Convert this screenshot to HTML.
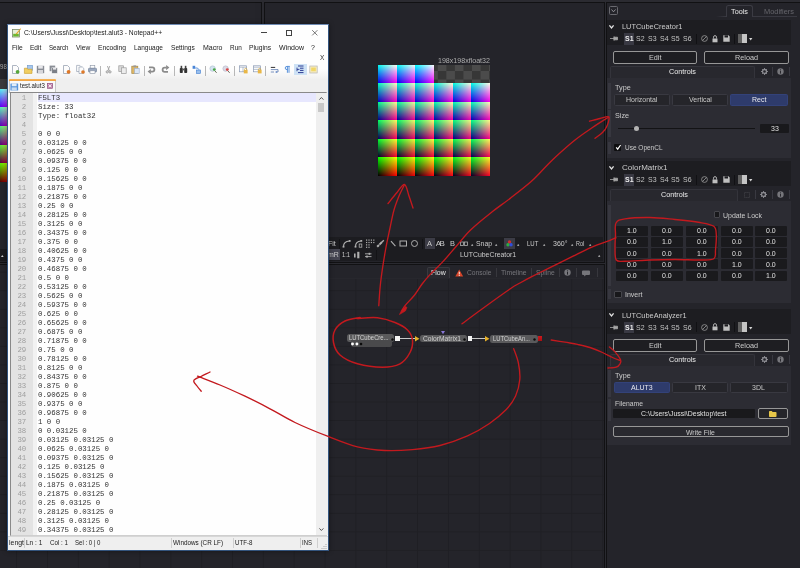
<!DOCTYPE html>
<html><head><meta charset="utf-8"><title>Notepad++ / Fusion LUT</title>
<style>
html,body{margin:0;padding:0;}
body{width:800px;height:568px;overflow:hidden;position:relative;background:#2a2a30;font-family:"Liberation Sans",sans-serif;}
body div{position:absolute;box-sizing:border-box;}
svg{position:absolute;left:0;top:0;overflow:visible;}
</style></head><body>
<div id="root" style="left:0;top:0;width:800px;height:568px;overflow:hidden;will-change:transform;opacity:0.999;">
<div style="left:0px;top:0px;width:800px;height:2.2px;background:#2c2c32;"></div>
<div style="left:-2px;top:2.1px;width:263.6px;height:260.6px;background:#25252b;border:1.2px solid #121214;"></div>
<div style="left:264px;top:2.1px;width:340.6px;height:260.6px;background:#25252b;border:1.2px solid #121214;"></div>
<div style="left:-2px;top:264.2px;width:606.6px;height:306px;background-color:#25252b;border:1.2px solid #121214;background-image:linear-gradient(to right,#202025 1px,transparent 1px),linear-gradient(to bottom,#202025 1px,transparent 1px);background-size:30.85px 18.56px;background-position:17.1px 6.7px;"></div>
<div style="left:0px;top:249px;width:7.5px;height:12.4px;background:#1b1b1f;"></div>
<svg style="left:1px;top:254.8px" width="2.6" height="2" viewBox="0 0 2.6 2"><path d="M0 2 L1.3 0 L2.6 2 Z" fill="#d0d0d0"/></svg>
<div style="left:-0.30px;top:61.90px;line-height:10px;font-size:6.6px;color:#a8a8a8;white-space:pre;transform:scaleX(0.930);transform-origin:0 50%;">98</div>
<div style="left:0px;top:78.8px;width:7.5px;height:10px;background:#3b3b3e;"></div>
<div style="left:0px;top:88.8px;width:7.5px;height:18.58px;background:linear-gradient(to right,#500,#a00),linear-gradient(to top,#000,#0e0),rgb(0,0,242);background-blend-mode:screen;"></div>
<div style="left:0px;top:107.38px;width:7.5px;height:18.58px;background:linear-gradient(to right,#500,#a00),linear-gradient(to top,#000,#0e0),rgb(0,0,182);background-blend-mode:screen;"></div>
<div style="left:0px;top:125.96px;width:7.5px;height:18.58px;background:linear-gradient(to right,#500,#a00),linear-gradient(to top,#000,#0e0),rgb(0,0,121);background-blend-mode:screen;"></div>
<div style="left:0px;top:144.54px;width:7.5px;height:18.58px;background:linear-gradient(to right,#500,#a00),linear-gradient(to top,#000,#0e0),rgb(0,0,61);background-blend-mode:screen;"></div>
<div style="left:0px;top:163.12px;width:7.5px;height:18.58px;background:linear-gradient(to right,#500,#a00),linear-gradient(to top,#000,#0e0),rgb(0,0,0);background-blend-mode:screen;"></div>
<div style="left:434px;top:64.5px;width:56px;height:18.5333px;background-color:#3a3a3a;background-image:conic-gradient(#4c4c4c 25%,#383838 0 50%,#4c4c4c 0 75%,#383838 0);background-size:17.1px 17.1px;background-position:-4.75px -2.55px;"></div>
<div style="left:378px;top:157.17px;width:18.97px;height:18.53px;background:linear-gradient(to right,#000,#f00),linear-gradient(to top,#000,#0f0),rgb(0,0,0);background-blend-mode:screen;"></div>
<div style="left:396.67px;top:157.17px;width:18.97px;height:18.53px;background:linear-gradient(to right,#000,#f00),linear-gradient(to top,#000,#0f0),rgb(0,0,8);background-blend-mode:screen;"></div>
<div style="left:415.33px;top:157.17px;width:18.97px;height:18.53px;background:linear-gradient(to right,#000,#f00),linear-gradient(to top,#000,#0f0),rgb(0,0,16);background-blend-mode:screen;"></div>
<div style="left:434px;top:157.17px;width:18.97px;height:18.53px;background:linear-gradient(to right,#000,#f00),linear-gradient(to top,#000,#0f0),rgb(0,0,24);background-blend-mode:screen;"></div>
<div style="left:452.67px;top:157.17px;width:18.97px;height:18.53px;background:linear-gradient(to right,#000,#f00),linear-gradient(to top,#000,#0f0),rgb(0,0,32);background-blend-mode:screen;"></div>
<div style="left:471.33px;top:157.17px;width:18.67px;height:18.53px;background:linear-gradient(to right,#000,#f00),linear-gradient(to top,#000,#0f0),rgb(0,0,40);background-blend-mode:screen;"></div>
<div style="left:378px;top:138.63px;width:18.97px;height:18.83px;background:linear-gradient(to right,#000,#f00),linear-gradient(to top,#000,#0f0),rgb(0,0,48);background-blend-mode:screen;"></div>
<div style="left:396.67px;top:138.63px;width:18.97px;height:18.83px;background:linear-gradient(to right,#000,#f00),linear-gradient(to top,#000,#0f0),rgb(0,0,56);background-blend-mode:screen;"></div>
<div style="left:415.33px;top:138.63px;width:18.97px;height:18.83px;background:linear-gradient(to right,#000,#f00),linear-gradient(to top,#000,#0f0),rgb(0,0,64);background-blend-mode:screen;"></div>
<div style="left:434px;top:138.63px;width:18.97px;height:18.83px;background:linear-gradient(to right,#000,#f00),linear-gradient(to top,#000,#0f0),rgb(0,0,72);background-blend-mode:screen;"></div>
<div style="left:452.67px;top:138.63px;width:18.97px;height:18.83px;background:linear-gradient(to right,#000,#f00),linear-gradient(to top,#000,#0f0),rgb(0,0,80);background-blend-mode:screen;"></div>
<div style="left:471.33px;top:138.63px;width:18.67px;height:18.83px;background:linear-gradient(to right,#000,#f00),linear-gradient(to top,#000,#0f0),rgb(0,0,88);background-blend-mode:screen;"></div>
<div style="left:378px;top:120.1px;width:18.97px;height:18.83px;background:linear-gradient(to right,#000,#f00),linear-gradient(to top,#000,#0f0),rgb(0,0,96);background-blend-mode:screen;"></div>
<div style="left:396.67px;top:120.1px;width:18.97px;height:18.83px;background:linear-gradient(to right,#000,#f00),linear-gradient(to top,#000,#0f0),rgb(0,0,104);background-blend-mode:screen;"></div>
<div style="left:415.33px;top:120.1px;width:18.97px;height:18.83px;background:linear-gradient(to right,#000,#f00),linear-gradient(to top,#000,#0f0),rgb(0,0,112);background-blend-mode:screen;"></div>
<div style="left:434px;top:120.1px;width:18.97px;height:18.83px;background:linear-gradient(to right,#000,#f00),linear-gradient(to top,#000,#0f0),rgb(0,0,120);background-blend-mode:screen;"></div>
<div style="left:452.67px;top:120.1px;width:18.97px;height:18.83px;background:linear-gradient(to right,#000,#f00),linear-gradient(to top,#000,#0f0),rgb(0,0,128);background-blend-mode:screen;"></div>
<div style="left:471.33px;top:120.1px;width:18.67px;height:18.83px;background:linear-gradient(to right,#000,#f00),linear-gradient(to top,#000,#0f0),rgb(0,0,135);background-blend-mode:screen;"></div>
<div style="left:378px;top:101.57px;width:18.97px;height:18.83px;background:linear-gradient(to right,#000,#f00),linear-gradient(to top,#000,#0f0),rgb(0,0,143);background-blend-mode:screen;"></div>
<div style="left:396.67px;top:101.57px;width:18.97px;height:18.83px;background:linear-gradient(to right,#000,#f00),linear-gradient(to top,#000,#0f0),rgb(0,0,151);background-blend-mode:screen;"></div>
<div style="left:415.33px;top:101.57px;width:18.97px;height:18.83px;background:linear-gradient(to right,#000,#f00),linear-gradient(to top,#000,#0f0),rgb(0,0,159);background-blend-mode:screen;"></div>
<div style="left:434px;top:101.57px;width:18.97px;height:18.83px;background:linear-gradient(to right,#000,#f00),linear-gradient(to top,#000,#0f0),rgb(0,0,167);background-blend-mode:screen;"></div>
<div style="left:452.67px;top:101.57px;width:18.97px;height:18.83px;background:linear-gradient(to right,#000,#f00),linear-gradient(to top,#000,#0f0),rgb(0,0,175);background-blend-mode:screen;"></div>
<div style="left:471.33px;top:101.57px;width:18.67px;height:18.83px;background:linear-gradient(to right,#000,#f00),linear-gradient(to top,#000,#0f0),rgb(0,0,183);background-blend-mode:screen;"></div>
<div style="left:378px;top:83.03px;width:18.97px;height:18.83px;background:linear-gradient(to right,#000,#f00),linear-gradient(to top,#000,#0f0),rgb(0,0,191);background-blend-mode:screen;"></div>
<div style="left:396.67px;top:83.03px;width:18.97px;height:18.83px;background:linear-gradient(to right,#000,#f00),linear-gradient(to top,#000,#0f0),rgb(0,0,199);background-blend-mode:screen;"></div>
<div style="left:415.33px;top:83.03px;width:18.97px;height:18.83px;background:linear-gradient(to right,#000,#f00),linear-gradient(to top,#000,#0f0),rgb(0,0,207);background-blend-mode:screen;"></div>
<div style="left:434px;top:83.03px;width:18.97px;height:18.83px;background:linear-gradient(to right,#000,#f00),linear-gradient(to top,#000,#0f0),rgb(0,0,215);background-blend-mode:screen;"></div>
<div style="left:452.67px;top:83.03px;width:18.97px;height:18.83px;background:linear-gradient(to right,#000,#f00),linear-gradient(to top,#000,#0f0),rgb(0,0,223);background-blend-mode:screen;"></div>
<div style="left:471.33px;top:83.03px;width:18.67px;height:18.83px;background:linear-gradient(to right,#000,#f00),linear-gradient(to top,#000,#0f0),rgb(0,0,231);background-blend-mode:screen;"></div>
<div style="left:378px;top:64.5px;width:18.97px;height:18.83px;background:linear-gradient(to right,#000,#f00),linear-gradient(to top,#000,#0f0),rgb(0,0,239);background-blend-mode:screen;"></div>
<div style="left:396.67px;top:64.5px;width:18.97px;height:18.83px;background:linear-gradient(to right,#000,#f00),linear-gradient(to top,#000,#0f0),rgb(0,0,247);background-blend-mode:screen;"></div>
<div style="left:415.33px;top:64.5px;width:18.97px;height:18.83px;background:linear-gradient(to right,#000,#f00),linear-gradient(to top,#000,#0f0),rgb(0,0,255);background-blend-mode:screen;"></div>
<div style="left:438.00px;top:55.70px;line-height:10px;font-size:7.2px;color:#b0b0b0;white-space:pre;transform:scaleX(0.985);transform-origin:0 50%;">198x198xfloat32</div>
<div style="left:328px;top:236.7px;width:275.4px;height:24.8px;background:#1d1d21;"></div>
<div style="left:328.40px;top:237.70px;line-height:11px;font-size:7.5px;color:#cccccc;white-space:pre;transform:scaleX(0.930);transform-origin:0 50%;">Fit</div>
<div style="left:339px;top:238.5px;width:1px;height:10px;background:#141417;"></div>
<svg style="left:342px;top:239px" width="9" height="9" viewBox="0 0 9 9"><path d="M1.5 7.5 Q1.5 2.5 7.5 2" fill="none" stroke="#b0b0b0" stroke-width="1.1"/><rect x="0.6" y="6.8" width="1.8" height="1.8" fill="#b0b0b0"/><rect x="6.8" y="1" width="1.8" height="1.8" fill="#b0b0b0"/></svg>
<svg style="left:354px;top:239px" width="9" height="9" viewBox="0 0 9 9"><path d="M1.5 7.5 Q1.5 2.5 7 2" fill="none" stroke="#b0b0b0" stroke-width="1.1"/><rect x="0.6" y="6.8" width="1.8" height="1.8" fill="#b0b0b0"/><rect x="6.4" y="1" width="1.8" height="1.8" fill="#b0b0b0"/><rect x="5.2" y="5" width="2.6" height="3.2" fill="none" stroke="#b0b0b0" stroke-width="0.8"/></svg>
<svg style="left:365px;top:239px" width="9" height="9" viewBox="0 0 9 9"><rect x="1" y="0.5" width="1.2" height="1.2" fill="#b0b0b0"/><rect x="1" y="2.9" width="1.2" height="1.2" fill="#b0b0b0"/><rect x="1" y="5.3" width="1.2" height="1.2" fill="#b0b0b0"/><rect x="1" y="7.7" width="1.2" height="1.2" fill="#b0b0b0"/><rect x="3.4" y="0.5" width="1.2" height="1.2" fill="#b0b0b0"/><rect x="3.4" y="2.9" width="1.2" height="1.2" fill="#b0b0b0"/><rect x="3.4" y="5.3" width="1.2" height="1.2" fill="#b0b0b0"/><rect x="3.4" y="7.7" width="1.2" height="1.2" fill="#b0b0b0"/><rect x="5.8" y="0.5" width="1.2" height="1.2" fill="#b0b0b0"/><rect x="5.8" y="2.9" width="1.2" height="1.2" fill="#b0b0b0"/><rect x="8.2" y="0.5" width="1.2" height="1.2" fill="#b0b0b0"/><rect x="8.2" y="2.9" width="1.2" height="1.2" fill="#b0b0b0"/></svg>
<svg style="left:376px;top:239px" width="9" height="9" viewBox="0 0 9 9"><path d="M1.2 7.8 L3 6 M3.4 5.6 L6 3" fill="none" stroke="#b0b0b0" stroke-width="2"/><path d="M6 3 L7.8 1.2" stroke="#b0b0b0" stroke-width="1.3"/></svg>
<svg style="left:388px;top:239px" width="9" height="9" viewBox="0 0 9 9"><path d="M3 2.2 L7.4 7.2" fill="none" stroke="#b0b0b0" stroke-width="1.1"/></svg>
<svg style="left:399px;top:240px" width="9" height="8" viewBox="0 0 9 8"><rect x="1" y="1" width="6.5" height="5" fill="none" stroke="#b0b0b0" stroke-width="1"/></svg>
<svg style="left:410px;top:239px" width="9" height="9" viewBox="0 0 9 9"><circle cx="4.5" cy="4.5" r="3" fill="none" stroke="#b0b0b0" stroke-width="1"/></svg>
<div style="left:422px;top:238.5px;width:1px;height:10px;background:#141417;"></div>
<div style="left:424.7px;top:238px;width:10px;height:10.5px;background:#3d3d47;"></div>
<div style="left:427.22px;top:237.70px;line-height:11px;font-size:8px;color:#cccccc;white-space:pre;transform:scaleX(0.930);transform-origin:0 50%;">A</div>
<div style="left:435.66px;top:237.70px;line-height:11px;font-size:8px;color:#cccccc;white-space:pre;letter-spacing:-1.5px;">AB</div>
<div style="left:449.82px;top:237.70px;line-height:11px;font-size:8px;color:#cccccc;white-space:pre;transform:scaleX(0.930);transform-origin:0 50%;">B</div>
<svg style="left:459.5px;top:240px" width="8" height="7" viewBox="0 0 8 7"><rect x="0.5" y="2" width="3" height="3.5" fill="none" stroke="#b0b0b0" stroke-width="0.8"/><rect x="4.5" y="2" width="3" height="3.5" fill="none" stroke="#b0b0b0" stroke-width="0.8"/></svg>
<svg style="left:470.6px;top:243.6px" width="2.4" height="1.8" viewBox="0 0 2.4 1.8"><path d="M0 1.8 L1.2 0 L2.4 1.8 Z" fill="#c8c8c8"/></svg>
<div style="left:476.00px;top:237.70px;line-height:11px;font-size:7.5px;color:#cccccc;white-space:pre;transform:scaleX(0.913);transform-origin:0 50%;">Snap</div>
<svg style="left:495.4px;top:243.6px" width="2.4" height="1.8" viewBox="0 0 2.4 1.8"><path d="M0 1.8 L1.2 0 L2.4 1.8 Z" fill="#c8c8c8"/></svg>
<div style="left:503.5px;top:238px;width:11.3px;height:10.5px;background:#3d3d47;"></div>
<svg style="left:505px;top:239px" width="9" height="9" viewBox="0 0 9 9"><circle cx="4.5" cy="3" r="1.7" fill="#d03030"/><circle cx="3" cy="5.8" r="1.7" fill="#30b040"/><circle cx="6" cy="5.8" r="1.7" fill="#3050e0"/></svg>
<svg style="left:516.6px;top:243.6px" width="2.4" height="1.8" viewBox="0 0 2.4 1.8"><path d="M0 1.8 L1.2 0 L2.4 1.8 Z" fill="#c8c8c8"/></svg>
<div style="left:527.00px;top:237.70px;line-height:11px;font-size:7.5px;color:#cccccc;white-space:pre;transform:scaleX(0.804);transform-origin:0 50%;">LUT</div>
<svg style="left:542.7px;top:243.6px" width="2.4" height="1.8" viewBox="0 0 2.4 1.8"><path d="M0 1.8 L1.2 0 L2.4 1.8 Z" fill="#c8c8c8"/></svg>
<div style="left:552.50px;top:237.70px;line-height:11px;font-size:7.5px;color:#cccccc;white-space:pre;transform:scaleX(0.935);transform-origin:0 50%;">360°</div>
<svg style="left:570.8px;top:243.6px" width="2.4" height="1.8" viewBox="0 0 2.4 1.8"><path d="M0 1.8 L1.2 0 L2.4 1.8 Z" fill="#c8c8c8"/></svg>
<div style="left:576.30px;top:237.70px;line-height:11px;font-size:7.5px;color:#cccccc;white-space:pre;transform:scaleX(0.728);transform-origin:0 50%;">RoI</div>
<svg style="left:589.2px;top:243.6px" width="2.4" height="1.8" viewBox="0 0 2.4 1.8"><path d="M0 1.8 L1.2 0 L2.4 1.8 Z" fill="#c8c8c8"/></svg>
<div style="left:328px;top:249px;width:11.9px;height:11.3px;background:#464652;"></div>
<div style="left:328.20px;top:249.30px;line-height:11px;font-size:7.5px;color:#cccccc;white-space:pre;transform:scaleX(0.930);transform-origin:0 50%;">mR</div>
<div style="left:341.80px;top:249.30px;line-height:11px;font-size:7.8px;color:#cccccc;white-space:pre;transform:scaleX(0.738);transform-origin:0 50%;">1:1</div>
<svg style="left:353px;top:251px" width="8" height="8" viewBox="0 0 8 8"><rect x="1" y="2.5" width="1.6" height="4" fill="#b0b0b0"/><rect x="4.2" y="0.8" width="2.2" height="6.5" fill="#b0b0b0"/></svg>
<svg style="left:364px;top:251px" width="9" height="8" viewBox="0 0 9 8"><path d="M1 2.8 H7.5 M1 5.6 H7.5" stroke="#b0b0b0" stroke-width="0.9" fill="none"/><rect x="4.6" y="1.8" width="1.6" height="2" fill="#b0b0b0"/><rect x="2.2" y="4.6" width="1.6" height="2" fill="#b0b0b0"/></svg>
<div style="left:376px;top:250px;width:1px;height:10px;background:#141417;"></div>
<div style="left:459.50px;top:249.30px;line-height:11px;font-size:7.5px;color:#cccccc;white-space:pre;transform:scaleX(0.917);transform-origin:0 50%;">LUTCubeCreator1</div>
<svg style="left:598px;top:254.6px" width="2.4" height="1.8" viewBox="0 0 2.4 1.8"><path d="M0 1.8 L1.2 0 L2.4 1.8 Z" fill="#c8c8c8"/></svg>
<div style="left:328px;top:265.4px;width:275.4px;height:12.6px;background:#25252b;"></div>
<div style="left:427px;top:266.5px;width:22.5px;height:11.5px;background:#2a2a30;border:1px solid #3a3a40;border-bottom:none;border-radius:2px 2px 0 0;"></div>
<div style="left:431.03px;top:267.10px;line-height:11px;font-size:7.5px;color:#e8e8e8;white-space:pre;transform:scaleX(0.930);transform-origin:0 50%;">Flow</div>
<svg style="left:454.5px;top:268.5px" width="8.5" height="8" viewBox="0 0 8.5 8"><path d="M4.25 0.5 L8.2 7.5 H0.3 Z" fill="#d8472b"/><rect x="3.8" y="2.8" width="0.9" height="2.6" fill="#fff"/><rect x="3.8" y="6" width="0.9" height="0.9" fill="#fff"/></svg>
<div style="left:466.50px;top:267.10px;line-height:11px;font-size:7.5px;color:#77777c;white-space:pre;transform:scaleX(0.890);transform-origin:0 50%;">Console</div>
<div style="left:495.6px;top:268px;width:1px;height:9px;background:#38383e;"></div>
<div style="left:501.00px;top:267.10px;line-height:11px;font-size:7.5px;color:#77777c;white-space:pre;transform:scaleX(0.912);transform-origin:0 50%;">Timeline</div>
<div style="left:531px;top:268px;width:1px;height:9px;background:#38383e;"></div>
<div style="left:536.00px;top:267.10px;line-height:11px;font-size:7.5px;color:#77777c;white-space:pre;transform:scaleX(0.896);transform-origin:0 50%;">Spline</div>
<div style="left:558.5px;top:268px;width:1px;height:9px;background:#38383e;"></div>
<svg style="left:564.4px;top:269px" width="7" height="7" viewBox="0 0 7 7"><circle cx="3.5" cy="3.5" r="3.2" fill="#77777c"/><rect x="3" y="3" width="1" height="2.6" fill="#222227"/><rect x="3" y="1.4" width="1" height="1" fill="#222227"/></svg>
<div style="left:576px;top:268px;width:1px;height:9px;background:#38383e;"></div>
<svg style="left:582px;top:269.5px" width="8" height="7" viewBox="0 0 8 7"><path d="M1 0.5 H7 Q8 0.5 8 1.5 V4 Q8 5 7 5 H4 L2.2 6.6 V5 H1 Q0 5 0 4 V1.5 Q0 0.5 1 0.5Z" fill="#77777c"/></svg>
<div style="left:597px;top:268px;width:1px;height:9px;background:#38383e;"></div>
<div style="left:328px;top:277.5px;width:276px;height:1px;background:#28282e;"></div>
<div style="left:347.4px;top:334px;width:47px;height:7.6px;background:#5b5b5d;border-radius:2.5px;"></div>
<div style="left:350.6px;top:340px;width:41.4px;height:7px;background:#4b4b4d;border-radius:0 0 2.5px 2.5px;"></div>
<div style="left:349.00px;top:332.80px;line-height:10px;font-size:6.8px;color:#d2d2d2;white-space:pre;transform:scaleX(0.864);transform-origin:0 50%;">LUTCubeCre...</div>
<svg style="left:390.8px;top:337.6px" width="3" height="3" viewBox="0 0 3 3"><circle cx="1.5" cy="1.5" r="1.2" fill="#0c0c0c"/></svg>
<svg style="left:350px;top:342.4px" width="14" height="4" viewBox="0 0 14 4"><circle cx="2.5" cy="2" r="1.45" fill="#fff"/><circle cx="6.9" cy="2" r="1.45" fill="#fff"/><circle cx="11" cy="2" r="1.3" fill="#0c0c0c"/></svg>
<div style="left:395px;top:336px;width:4.8px;height:5px;background:#f4f4f4;"></div>
<div style="left:399.8px;top:338.1px;width:15.2px;height:1px;background:#c8c8c8;"></div>
<svg style="left:415px;top:335.8px" width="4.5" height="5.4" viewBox="0 0 4.5 5.4"><path d="M0 0 L4.5 2.7 L0 5.4Z" fill="#e8b22a"/></svg>
<div style="left:420.2px;top:334.5px;width:46.8px;height:7.7px;background:#5b5b5d;border-radius:2.5px;"></div>
<div style="left:423.00px;top:333.50px;line-height:10px;font-size:6.8px;color:#d2d2d2;white-space:pre;transform:scaleX(0.986);transform-origin:0 50%;">ColorMatrix1</div>
<svg style="left:463px;top:337.6px" width="3" height="3" viewBox="0 0 3 3"><circle cx="1.5" cy="1.5" r="1.2" fill="#0c0c0c"/></svg>
<svg style="left:441px;top:330.5px" width="4" height="3.2" viewBox="0 0 4 3.2"><path d="M0 0 H4 L2 3.2Z" fill="#8a78d8"/></svg>
<div style="left:467.7px;top:336.3px;width:4.4px;height:4.8px;background:#f4f4f4;"></div>
<div style="left:472px;top:338.2px;width:13px;height:1px;background:#c8c8c8;"></div>
<svg style="left:485px;top:335.8px" width="4.5" height="5.4" viewBox="0 0 4.5 5.4"><path d="M0 0 L4.5 2.7 L0 5.4Z" fill="#e8b22a"/></svg>
<div style="left:489.8px;top:334.8px;width:47.8px;height:7.8px;background:#5b5b5d;border-radius:2.5px;"></div>
<div style="left:493.00px;top:333.80px;line-height:10px;font-size:6.8px;color:#d2d2d2;white-space:pre;transform:scaleX(0.859);transform-origin:0 50%;">LUTCubeAn...</div>
<svg style="left:533px;top:338px" width="3" height="3" viewBox="0 0 3 3"><circle cx="1.5" cy="1.5" r="1.2" fill="#0c0c0c"/></svg>
<div style="left:538px;top:336.4px;width:4.4px;height:4.8px;background:linear-gradient(to bottom,#d01a1e,#a81014);"></div>
<div style="left:605.9px;top:2.1px;width:197px;height:570px;background:#25252b;border:1.2px solid #121214;"></div>
<div style="left:608.5px;top:5.5px;width:9px;height:9px;border:1px solid #6a6a70;border-radius:1.5px;"></div>
<svg style="left:610.5px;top:8.5px" width="5" height="3.5" viewBox="0 0 5 3.5"><path d="M0.5 0.5 L2.5 2.8 L4.5 0.5" fill="none" stroke="#9a9aa0" stroke-width="0.9"/></svg>
<div style="left:716px;top:16px;width:81px;height:1px;background:linear-gradient(to right,#25252b,#3a3a42 12%,#3a3a42);"></div>
<div style="left:726px;top:5.3px;width:26.6px;height:11.7px;background:#25252b;border:1px solid #3c3c44;border-bottom:none;border-radius:2.5px 2.5px 0 0;"></div>
<div style="left:730.84px;top:5.70px;line-height:11px;font-size:7.8px;color:#ececec;white-space:pre;transform:scaleX(0.930);transform-origin:0 50%;">Tools</div>
<div style="left:764.00px;top:5.70px;line-height:11px;font-size:7.5px;color:#66666c;white-space:pre;transform:scaleX(0.986);transform-origin:0 50%;">Modifiers</div>
<div style="left:607px;top:20px;width:184px;height:12.2px;background:#1e1e22;"></div>
<svg style="left:608.5px;top:24.5px" width="5" height="3.6" viewBox="0 0 5 3.6"><path d="M0.4 0.4 L2.5 2.9 L4.6 0.4" fill="none" stroke="#e4e4e4" stroke-width="1.3"/></svg>
<div style="left:622.00px;top:20.90px;line-height:11px;font-size:7.8px;color:#cccccc;white-space:pre;transform:scaleX(0.949);transform-origin:0 50%;">LUTCubeCreator1</div>
<div style="left:607px;top:32px;width:184px;height:13.3px;background:#1e1e22;"></div>
<svg style="left:610px;top:36px" width="8" height="5" viewBox="0 0 8 5"><path d="M0 2.5 H4" stroke="#a8a8a8" stroke-width="0.8"/><path d="M4 0.3 V4.7 M4 1.2 H7.5 V3.8 H4Z" stroke="#a8a8a8" stroke-width="0.8" fill="#a8a8a8"/></svg>
<div style="left:624px;top:32.8px;width:10px;height:11.9px;background:#3a3a44;"></div>
<div style="left:624.73px;top:33.20px;line-height:11px;font-size:7.5px;color:#f0f0f0;white-space:pre;font-weight:700;transform:scaleX(0.930);transform-origin:0 50%;">S1</div>
<div style="left:636.03px;top:33.20px;line-height:11px;font-size:7.5px;color:#c4c4c4;white-space:pre;transform:scaleX(0.930);transform-origin:0 50%;">S2</div>
<div style="left:647.73px;top:33.20px;line-height:11px;font-size:7.5px;color:#c4c4c4;white-space:pre;transform:scaleX(0.930);transform-origin:0 50%;">S3</div>
<div style="left:659.73px;top:33.20px;line-height:11px;font-size:7.5px;color:#c4c4c4;white-space:pre;transform:scaleX(0.930);transform-origin:0 50%;">S4</div>
<div style="left:671.33px;top:33.20px;line-height:11px;font-size:7.5px;color:#c4c4c4;white-space:pre;transform:scaleX(0.930);transform-origin:0 50%;">S5</div>
<div style="left:683.23px;top:33.20px;line-height:11px;font-size:7.5px;color:#c4c4c4;white-space:pre;transform:scaleX(0.930);transform-origin:0 50%;">S6</div>
<div style="left:696px;top:33.5px;width:1px;height:10px;background:#121215;"></div>
<svg style="left:701px;top:35px" width="7" height="7" viewBox="0 0 7 7"><circle cx="3.5" cy="3.5" r="2.9" fill="none" stroke="#9a9a9a" stroke-width="0.8"/><path d="M1.5 5.5 L5.5 1.5" stroke="#9a9a9a" stroke-width="0.8"/></svg>
<svg style="left:712px;top:34.5px" width="6" height="8" viewBox="0 0 6 8"><path d="M1.5 3.5 V2.2 Q1.5 0.6 3 0.6 Q4.5 0.6 4.5 2.2 V3.5" fill="none" stroke="#c0c0c0" stroke-width="0.9"/><rect x="0.5" y="3.5" width="5" height="3.8" fill="#c0c0c0"/></svg>
<svg style="left:722.5px;top:35px" width="7" height="7" viewBox="0 0 7 7"><path d="M0.3 0.3 H5.5 L6.7 1.5 V6.7 H0.3Z" fill="#c0c0c0"/><rect x="1.5" y="0.3" width="3.5" height="2.2" fill="#1d1d21"/></svg>
<div style="left:733.5px;top:33.5px;width:1px;height:10px;background:#121215;"></div>
<div style="left:737.6px;top:33.7px;width:4.4px;height:9.6px;background:#606060;"></div>
<div style="left:742px;top:33.7px;width:4.8px;height:9.6px;background:#c6c6c6;"></div>
<svg style="left:749.3px;top:38.3px" width="3.4" height="2.4" viewBox="0 0 3.4 2.4"><path d="M0 0 H3.4 L1.7 2.4Z" fill="#d8d8d8"/></svg>
<div style="left:613px;top:51px;width:84px;height:13px;background:#1f1f23;border:1px solid #989898;border-radius:2px;"></div>
<div style="left:648.75px;top:52.20px;line-height:11px;font-size:7.8px;color:#cccccc;white-space:pre;transform:scaleX(0.930);transform-origin:0 50%;">Edit</div>
<div style="left:704px;top:51px;width:85px;height:13px;background:#1f1f23;border:1px solid #989898;border-radius:2px;"></div>
<div style="left:735.01px;top:52.20px;line-height:11px;font-size:7.8px;color:#cccccc;white-space:pre;transform:scaleX(0.930);transform-origin:0 50%;">Reload</div>
<div style="left:609.5px;top:65.5px;width:145.5px;height:12px;background:#29292f;border:1px solid #35353c;border-bottom:none;border-radius:2px 2px 0 0;"></div>
<div style="left:669.49px;top:66.20px;line-height:11px;font-size:7.8px;color:#ececec;white-space:pre;transform:scaleX(0.930);transform-origin:0 50%;">Controls</div>
<svg style="left:760.5px;top:68px" width="7" height="7" viewBox="0 0 7 7"><circle cx="3.5" cy="3.5" r="2" fill="none" stroke="#8c8c92" stroke-width="1.3"/><path d="M3.5 0 V1.2 M3.5 5.8 V7 M0 3.5 H1.2 M5.8 3.5 H7 M1 1 L1.9 1.9 M5.1 5.1 L6 6 M6 1 L5.1 1.9 M1 6 L1.9 5.1" stroke="#8c8c92" stroke-width="0.9"/></svg>
<div style="left:772px;top:67px;width:1px;height:9px;background:#3a3a42;"></div>
<svg style="left:777px;top:68px" width="7" height="7" viewBox="0 0 7 7"><circle cx="3.5" cy="3.5" r="3.2" fill="#77777c"/><rect x="3" y="3" width="1" height="2.6" fill="#28282e"/><rect x="3" y="1.4" width="1" height="1" fill="#28282e"/></svg>
<div style="left:789px;top:67px;width:1px;height:9px;background:#3a3a42;"></div>
<div style="left:607px;top:77.5px;width:184px;height:80px;background:#2d2d34;"></div>
<div style="left:607.5px;top:82.5px;width:3.5px;height:26.5px;background:#383840;"></div>
<div style="left:607.5px;top:110px;width:3.5px;height:27px;background:#383840;"></div>
<div style="left:607.5px;top:142px;width:3.5px;height:11.8px;background:#383840;"></div>
<div style="left:615.00px;top:81.90px;line-height:11px;font-size:7.8px;color:#cccccc;white-space:pre;transform:scaleX(0.930);transform-origin:0 50%;">Type</div>
<div style="left:614px;top:94px;width:56px;height:11.5px;background:#26262b;border:1px solid #3a3a42;border-radius:1.5px;"></div>
<div style="left:626.30px;top:94.45px;line-height:11px;font-size:7.5px;color:#c8c8c8;white-space:pre;transform:scaleX(0.930);transform-origin:0 50%;">Horizontal</div>
<div style="left:672px;top:94px;width:56px;height:11.5px;background:#26262b;border:1px solid #3a3a42;border-radius:1.5px;"></div>
<div style="left:688.56px;top:94.45px;line-height:11px;font-size:7.5px;color:#c8c8c8;white-space:pre;transform:scaleX(0.930);transform-origin:0 50%;">Vertical</div>
<div style="left:730px;top:94px;width:57.5px;height:11.5px;background:#2f3c6c;border:1px solid #34437a;border-radius:1.5px;"></div>
<div style="left:751.58px;top:94.45px;line-height:11px;font-size:7.5px;color:#e8e8ee;white-space:pre;transform:scaleX(0.930);transform-origin:0 50%;">Rect</div>
<div style="left:615.00px;top:110.00px;line-height:11px;font-size:7.8px;color:#cccccc;white-space:pre;transform:scaleX(0.930);transform-origin:0 50%;">Size</div>
<div style="left:617.5px;top:127.5px;width:137.5px;height:1.2px;background:#141416;"></div>
<div style="left:634.2px;top:125.5px;width:5.2px;height:5.2px;background:#b4b4b4;border-radius:2.6px;"></div>
<div style="left:760px;top:124px;width:29px;height:8.8px;background:#1a1a1d;border-radius:1px;"></div>
<div style="left:770.62px;top:123.00px;line-height:11px;font-size:7.5px;color:#e0e0e0;white-space:pre;transform:scaleX(0.930);transform-origin:0 50%;">33</div>
<div style="left:614.3px;top:143.6px;width:7px;height:7.4px;background:#0f0f11;border-radius:1px;"></div>
<svg style="left:615px;top:144px" width="6.5" height="6.5" viewBox="0 0 6.5 6.5"><path d="M1.2 3.4 L2.7 5.2 L5.6 1" fill="none" stroke="#fff" stroke-width="1.2"/></svg>
<div style="left:625.00px;top:142.10px;line-height:11px;font-size:7.8px;color:#cccccc;white-space:pre;transform:scaleX(0.832);transform-origin:0 50%;">Use OpenCL</div>
<div style="left:607px;top:161px;width:184px;height:12.2px;background:#1e1e22;"></div>
<svg style="left:608.5px;top:165.5px" width="5" height="3.6" viewBox="0 0 5 3.6"><path d="M0.4 0.4 L2.5 2.9 L4.6 0.4" fill="none" stroke="#e4e4e4" stroke-width="1.3"/></svg>
<div style="left:622.00px;top:161.90px;line-height:11px;font-size:7.8px;color:#cccccc;white-space:pre;transform:scaleX(1.029);transform-origin:0 50%;">ColorMatrix1</div>
<div style="left:607px;top:173px;width:184px;height:13.3px;background:#1e1e22;"></div>
<svg style="left:610px;top:177px" width="8" height="5" viewBox="0 0 8 5"><path d="M0 2.5 H4" stroke="#a8a8a8" stroke-width="0.8"/><path d="M4 0.3 V4.7 M4 1.2 H7.5 V3.8 H4Z" stroke="#a8a8a8" stroke-width="0.8" fill="#a8a8a8"/></svg>
<div style="left:624px;top:173.8px;width:10px;height:11.9px;background:#3a3a44;"></div>
<div style="left:624.73px;top:174.20px;line-height:11px;font-size:7.5px;color:#f0f0f0;white-space:pre;font-weight:700;transform:scaleX(0.930);transform-origin:0 50%;">S1</div>
<div style="left:636.03px;top:174.20px;line-height:11px;font-size:7.5px;color:#c4c4c4;white-space:pre;transform:scaleX(0.930);transform-origin:0 50%;">S2</div>
<div style="left:647.73px;top:174.20px;line-height:11px;font-size:7.5px;color:#c4c4c4;white-space:pre;transform:scaleX(0.930);transform-origin:0 50%;">S3</div>
<div style="left:659.73px;top:174.20px;line-height:11px;font-size:7.5px;color:#c4c4c4;white-space:pre;transform:scaleX(0.930);transform-origin:0 50%;">S4</div>
<div style="left:671.33px;top:174.20px;line-height:11px;font-size:7.5px;color:#c4c4c4;white-space:pre;transform:scaleX(0.930);transform-origin:0 50%;">S5</div>
<div style="left:683.23px;top:174.20px;line-height:11px;font-size:7.5px;color:#c4c4c4;white-space:pre;transform:scaleX(0.930);transform-origin:0 50%;">S6</div>
<div style="left:696px;top:174.5px;width:1px;height:10px;background:#121215;"></div>
<svg style="left:701px;top:176px" width="7" height="7" viewBox="0 0 7 7"><circle cx="3.5" cy="3.5" r="2.9" fill="none" stroke="#9a9a9a" stroke-width="0.8"/><path d="M1.5 5.5 L5.5 1.5" stroke="#9a9a9a" stroke-width="0.8"/></svg>
<svg style="left:712px;top:175.5px" width="6" height="8" viewBox="0 0 6 8"><path d="M1.5 3.5 V2.2 Q1.5 0.6 3 0.6 Q4.5 0.6 4.5 2.2 V3.5" fill="none" stroke="#c0c0c0" stroke-width="0.9"/><rect x="0.5" y="3.5" width="5" height="3.8" fill="#c0c0c0"/></svg>
<svg style="left:722.5px;top:176px" width="7" height="7" viewBox="0 0 7 7"><path d="M0.3 0.3 H5.5 L6.7 1.5 V6.7 H0.3Z" fill="#c0c0c0"/><rect x="1.5" y="0.3" width="3.5" height="2.2" fill="#1d1d21"/></svg>
<div style="left:733.5px;top:174.5px;width:1px;height:10px;background:#121215;"></div>
<div style="left:737.6px;top:174.7px;width:4.4px;height:9.6px;background:#606060;"></div>
<div style="left:742px;top:174.7px;width:4.8px;height:9.6px;background:#c6c6c6;"></div>
<svg style="left:749.3px;top:179.3px" width="3.4" height="2.4" viewBox="0 0 3.4 2.4"><path d="M0 0 H3.4 L1.7 2.4Z" fill="#d8d8d8"/></svg>
<div style="left:609.5px;top:188.5px;width:128.5px;height:12px;background:#29292f;border:1px solid #35353c;border-bottom:none;border-radius:2px 2px 0 0;"></div>
<div style="left:660.99px;top:189.20px;line-height:11px;font-size:7.8px;color:#ececec;white-space:pre;transform:scaleX(0.930);transform-origin:0 50%;">Controls</div>
<svg style="left:743.8px;top:191.5px" width="6" height="6" viewBox="0 0 6 6"><rect x="0.5" y="0.5" width="5" height="5" fill="none" stroke="#44444a" stroke-width="0.9" stroke-dasharray="1.2 0.8"/></svg>
<div style="left:755px;top:190px;width:1px;height:9px;background:#3a3a42;"></div>
<svg style="left:760px;top:191px" width="7" height="7" viewBox="0 0 7 7"><circle cx="3.5" cy="3.5" r="2" fill="none" stroke="#8c8c92" stroke-width="1.3"/><path d="M3.5 0 V1.2 M3.5 5.8 V7 M0 3.5 H1.2 M5.8 3.5 H7 M1 1 L1.9 1.9 M5.1 5.1 L6 6 M6 1 L5.1 1.9 M1 6 L1.9 5.1" stroke="#8c8c92" stroke-width="0.9"/></svg>
<div style="left:772px;top:190px;width:1px;height:9px;background:#3a3a42;"></div>
<svg style="left:777px;top:191px" width="7" height="7" viewBox="0 0 7 7"><circle cx="3.5" cy="3.5" r="3.2" fill="#77777c"/><rect x="3" y="3" width="1" height="2.6" fill="#28282e"/><rect x="3" y="1.4" width="1" height="1" fill="#28282e"/></svg>
<div style="left:789px;top:190px;width:1px;height:9px;background:#3a3a42;"></div>
<div style="left:607px;top:200.5px;width:184px;height:102px;background:#2d2d34;"></div>
<div style="left:607.5px;top:205px;width:3.5px;height:81px;background:#383840;"></div>
<div style="left:607.5px;top:288.8px;width:3.5px;height:10.7px;background:#383840;"></div>
<div style="left:713.6px;top:210.9px;width:6.8px;height:7.2px;background:#19191c;border:1px solid #46464c;border-radius:1px;"></div>
<div style="left:723.00px;top:209.50px;line-height:11px;font-size:7.8px;color:#cccccc;white-space:pre;transform:scaleX(0.891);transform-origin:0 50%;">Update Lock</div>
<div style="left:616px;top:225.5px;width:32.3px;height:10.2px;background:#1b1b1e;border-radius:1px;"></div>
<div style="left:627.35px;top:225.20px;line-height:11px;font-size:7.5px;color:#e0e0e0;white-space:pre;transform:scaleX(0.930);transform-origin:0 50%;">1.0</div>
<div style="left:651px;top:225.5px;width:32.3px;height:10.2px;background:#1b1b1e;border-radius:1px;"></div>
<div style="left:662.35px;top:225.20px;line-height:11px;font-size:7.5px;color:#e0e0e0;white-space:pre;transform:scaleX(0.930);transform-origin:0 50%;">0.0</div>
<div style="left:685.8px;top:225.5px;width:32.3px;height:10.2px;background:#1b1b1e;border-radius:1px;"></div>
<div style="left:697.15px;top:225.20px;line-height:11px;font-size:7.5px;color:#e0e0e0;white-space:pre;transform:scaleX(0.930);transform-origin:0 50%;">0.0</div>
<div style="left:720.5px;top:225.5px;width:32.3px;height:10.2px;background:#1b1b1e;border-radius:1px;"></div>
<div style="left:731.85px;top:225.20px;line-height:11px;font-size:7.5px;color:#e0e0e0;white-space:pre;transform:scaleX(0.930);transform-origin:0 50%;">0.0</div>
<div style="left:755px;top:225.5px;width:32.3px;height:10.2px;background:#1b1b1e;border-radius:1px;"></div>
<div style="left:766.35px;top:225.20px;line-height:11px;font-size:7.5px;color:#e0e0e0;white-space:pre;transform:scaleX(0.930);transform-origin:0 50%;">0.0</div>
<div style="left:616px;top:236.75px;width:32.3px;height:10.2px;background:#1b1b1e;border-radius:1px;"></div>
<div style="left:627.35px;top:236.45px;line-height:11px;font-size:7.5px;color:#e0e0e0;white-space:pre;transform:scaleX(0.930);transform-origin:0 50%;">0.0</div>
<div style="left:651px;top:236.75px;width:32.3px;height:10.2px;background:#1b1b1e;border-radius:1px;"></div>
<div style="left:662.35px;top:236.45px;line-height:11px;font-size:7.5px;color:#e0e0e0;white-space:pre;transform:scaleX(0.930);transform-origin:0 50%;">1.0</div>
<div style="left:685.8px;top:236.75px;width:32.3px;height:10.2px;background:#1b1b1e;border-radius:1px;"></div>
<div style="left:697.15px;top:236.45px;line-height:11px;font-size:7.5px;color:#e0e0e0;white-space:pre;transform:scaleX(0.930);transform-origin:0 50%;">0.0</div>
<div style="left:720.5px;top:236.75px;width:32.3px;height:10.2px;background:#1b1b1e;border-radius:1px;"></div>
<div style="left:731.85px;top:236.45px;line-height:11px;font-size:7.5px;color:#e0e0e0;white-space:pre;transform:scaleX(0.930);transform-origin:0 50%;">0.0</div>
<div style="left:755px;top:236.75px;width:32.3px;height:10.2px;background:#1b1b1e;border-radius:1px;"></div>
<div style="left:766.35px;top:236.45px;line-height:11px;font-size:7.5px;color:#e0e0e0;white-space:pre;transform:scaleX(0.930);transform-origin:0 50%;">0.0</div>
<div style="left:616px;top:248px;width:32.3px;height:10.2px;background:#1b1b1e;border-radius:1px;"></div>
<div style="left:627.35px;top:247.70px;line-height:11px;font-size:7.5px;color:#e0e0e0;white-space:pre;transform:scaleX(0.930);transform-origin:0 50%;">0.0</div>
<div style="left:651px;top:248px;width:32.3px;height:10.2px;background:#1b1b1e;border-radius:1px;"></div>
<div style="left:662.35px;top:247.70px;line-height:11px;font-size:7.5px;color:#e0e0e0;white-space:pre;transform:scaleX(0.930);transform-origin:0 50%;">0.0</div>
<div style="left:685.8px;top:248px;width:32.3px;height:10.2px;background:#1b1b1e;border-radius:1px;"></div>
<div style="left:697.15px;top:247.70px;line-height:11px;font-size:7.5px;color:#e0e0e0;white-space:pre;transform:scaleX(0.930);transform-origin:0 50%;">1.0</div>
<div style="left:720.5px;top:248px;width:32.3px;height:10.2px;background:#1b1b1e;border-radius:1px;"></div>
<div style="left:731.85px;top:247.70px;line-height:11px;font-size:7.5px;color:#e0e0e0;white-space:pre;transform:scaleX(0.930);transform-origin:0 50%;">0.0</div>
<div style="left:755px;top:248px;width:32.3px;height:10.2px;background:#1b1b1e;border-radius:1px;"></div>
<div style="left:766.35px;top:247.70px;line-height:11px;font-size:7.5px;color:#e0e0e0;white-space:pre;transform:scaleX(0.930);transform-origin:0 50%;">0.0</div>
<div style="left:616px;top:259.25px;width:32.3px;height:10.2px;background:#1b1b1e;border-radius:1px;"></div>
<div style="left:627.35px;top:258.95px;line-height:11px;font-size:7.5px;color:#e0e0e0;white-space:pre;transform:scaleX(0.930);transform-origin:0 50%;">0.0</div>
<div style="left:651px;top:259.25px;width:32.3px;height:10.2px;background:#1b1b1e;border-radius:1px;"></div>
<div style="left:662.35px;top:258.95px;line-height:11px;font-size:7.5px;color:#e0e0e0;white-space:pre;transform:scaleX(0.930);transform-origin:0 50%;">0.0</div>
<div style="left:685.8px;top:259.25px;width:32.3px;height:10.2px;background:#1b1b1e;border-radius:1px;"></div>
<div style="left:697.15px;top:258.95px;line-height:11px;font-size:7.5px;color:#e0e0e0;white-space:pre;transform:scaleX(0.930);transform-origin:0 50%;">0.0</div>
<div style="left:720.5px;top:259.25px;width:32.3px;height:10.2px;background:#1b1b1e;border-radius:1px;"></div>
<div style="left:731.85px;top:258.95px;line-height:11px;font-size:7.5px;color:#e0e0e0;white-space:pre;transform:scaleX(0.930);transform-origin:0 50%;">1.0</div>
<div style="left:755px;top:259.25px;width:32.3px;height:10.2px;background:#1b1b1e;border-radius:1px;"></div>
<div style="left:766.35px;top:258.95px;line-height:11px;font-size:7.5px;color:#e0e0e0;white-space:pre;transform:scaleX(0.930);transform-origin:0 50%;">0.0</div>
<div style="left:616px;top:270.5px;width:32.3px;height:10.2px;background:#1b1b1e;border-radius:1px;"></div>
<div style="left:627.35px;top:270.20px;line-height:11px;font-size:7.5px;color:#e0e0e0;white-space:pre;transform:scaleX(0.930);transform-origin:0 50%;">0.0</div>
<div style="left:651px;top:270.5px;width:32.3px;height:10.2px;background:#1b1b1e;border-radius:1px;"></div>
<div style="left:662.35px;top:270.20px;line-height:11px;font-size:7.5px;color:#e0e0e0;white-space:pre;transform:scaleX(0.930);transform-origin:0 50%;">0.0</div>
<div style="left:685.8px;top:270.5px;width:32.3px;height:10.2px;background:#1b1b1e;border-radius:1px;"></div>
<div style="left:697.15px;top:270.20px;line-height:11px;font-size:7.5px;color:#e0e0e0;white-space:pre;transform:scaleX(0.930);transform-origin:0 50%;">0.0</div>
<div style="left:720.5px;top:270.5px;width:32.3px;height:10.2px;background:#1b1b1e;border-radius:1px;"></div>
<div style="left:731.85px;top:270.20px;line-height:11px;font-size:7.5px;color:#e0e0e0;white-space:pre;transform:scaleX(0.930);transform-origin:0 50%;">0.0</div>
<div style="left:755px;top:270.5px;width:32.3px;height:10.2px;background:#1b1b1e;border-radius:1px;"></div>
<div style="left:766.35px;top:270.20px;line-height:11px;font-size:7.5px;color:#e0e0e0;white-space:pre;transform:scaleX(0.930);transform-origin:0 50%;">1.0</div>
<div style="left:614px;top:290.5px;width:7.6px;height:7.6px;background:#19191c;border:1px solid #46464c;border-radius:1px;"></div>
<div style="left:624.50px;top:289.10px;line-height:11px;font-size:7.8px;color:#cccccc;white-space:pre;transform:scaleX(0.897);transform-origin:0 50%;">Invert</div>
<div style="left:607px;top:308.7px;width:184px;height:12.2px;background:#1e1e22;"></div>
<svg style="left:608.5px;top:313.2px" width="5" height="3.6" viewBox="0 0 5 3.6"><path d="M0.4 0.4 L2.5 2.9 L4.6 0.4" fill="none" stroke="#e4e4e4" stroke-width="1.3"/></svg>
<div style="left:622.00px;top:309.60px;line-height:11px;font-size:7.8px;color:#cccccc;white-space:pre;transform:scaleX(0.948);transform-origin:0 50%;">LUTCubeAnalyzer1</div>
<div style="left:607px;top:320.7px;width:184px;height:13.3px;background:#1e1e22;"></div>
<svg style="left:610px;top:324.7px" width="8" height="5" viewBox="0 0 8 5"><path d="M0 2.5 H4" stroke="#a8a8a8" stroke-width="0.8"/><path d="M4 0.3 V4.7 M4 1.2 H7.5 V3.8 H4Z" stroke="#a8a8a8" stroke-width="0.8" fill="#a8a8a8"/></svg>
<div style="left:624px;top:321.5px;width:10px;height:11.9px;background:#3a3a44;"></div>
<div style="left:624.73px;top:321.90px;line-height:11px;font-size:7.5px;color:#f0f0f0;white-space:pre;font-weight:700;transform:scaleX(0.930);transform-origin:0 50%;">S1</div>
<div style="left:636.03px;top:321.90px;line-height:11px;font-size:7.5px;color:#c4c4c4;white-space:pre;transform:scaleX(0.930);transform-origin:0 50%;">S2</div>
<div style="left:647.73px;top:321.90px;line-height:11px;font-size:7.5px;color:#c4c4c4;white-space:pre;transform:scaleX(0.930);transform-origin:0 50%;">S3</div>
<div style="left:659.73px;top:321.90px;line-height:11px;font-size:7.5px;color:#c4c4c4;white-space:pre;transform:scaleX(0.930);transform-origin:0 50%;">S4</div>
<div style="left:671.33px;top:321.90px;line-height:11px;font-size:7.5px;color:#c4c4c4;white-space:pre;transform:scaleX(0.930);transform-origin:0 50%;">S5</div>
<div style="left:683.23px;top:321.90px;line-height:11px;font-size:7.5px;color:#c4c4c4;white-space:pre;transform:scaleX(0.930);transform-origin:0 50%;">S6</div>
<div style="left:696px;top:322.2px;width:1px;height:10px;background:#121215;"></div>
<svg style="left:701px;top:323.7px" width="7" height="7" viewBox="0 0 7 7"><circle cx="3.5" cy="3.5" r="2.9" fill="none" stroke="#9a9a9a" stroke-width="0.8"/><path d="M1.5 5.5 L5.5 1.5" stroke="#9a9a9a" stroke-width="0.8"/></svg>
<svg style="left:712px;top:323.2px" width="6" height="8" viewBox="0 0 6 8"><path d="M1.5 3.5 V2.2 Q1.5 0.6 3 0.6 Q4.5 0.6 4.5 2.2 V3.5" fill="none" stroke="#c0c0c0" stroke-width="0.9"/><rect x="0.5" y="3.5" width="5" height="3.8" fill="#c0c0c0"/></svg>
<svg style="left:722.5px;top:323.7px" width="7" height="7" viewBox="0 0 7 7"><path d="M0.3 0.3 H5.5 L6.7 1.5 V6.7 H0.3Z" fill="#c0c0c0"/><rect x="1.5" y="0.3" width="3.5" height="2.2" fill="#1d1d21"/></svg>
<div style="left:733.5px;top:322.2px;width:1px;height:10px;background:#121215;"></div>
<div style="left:737.6px;top:322.4px;width:4.4px;height:9.6px;background:#606060;"></div>
<div style="left:742px;top:322.4px;width:4.8px;height:9.6px;background:#c6c6c6;"></div>
<svg style="left:749.3px;top:327px" width="3.4" height="2.4" viewBox="0 0 3.4 2.4"><path d="M0 0 H3.4 L1.7 2.4Z" fill="#d8d8d8"/></svg>
<div style="left:613px;top:339.3px;width:84px;height:12.5px;background:#1f1f23;border:1px solid #989898;border-radius:2px;"></div>
<div style="left:648.75px;top:340.25px;line-height:11px;font-size:7.8px;color:#cccccc;white-space:pre;transform:scaleX(0.930);transform-origin:0 50%;">Edit</div>
<div style="left:704px;top:339.3px;width:85px;height:12.5px;background:#1f1f23;border:1px solid #989898;border-radius:2px;"></div>
<div style="left:735.01px;top:340.25px;line-height:11px;font-size:7.8px;color:#cccccc;white-space:pre;transform:scaleX(0.930);transform-origin:0 50%;">Reload</div>
<div style="left:609.5px;top:353.7px;width:145.5px;height:12px;background:#29292f;border:1px solid #35353c;border-bottom:none;border-radius:2px 2px 0 0;"></div>
<div style="left:669.49px;top:354.40px;line-height:11px;font-size:7.8px;color:#ececec;white-space:pre;transform:scaleX(0.930);transform-origin:0 50%;">Controls</div>
<svg style="left:760.5px;top:356.2px" width="7" height="7" viewBox="0 0 7 7"><circle cx="3.5" cy="3.5" r="2" fill="none" stroke="#8c8c92" stroke-width="1.3"/><path d="M3.5 0 V1.2 M3.5 5.8 V7 M0 3.5 H1.2 M5.8 3.5 H7 M1 1 L1.9 1.9 M5.1 5.1 L6 6 M6 1 L5.1 1.9 M1 6 L1.9 5.1" stroke="#8c8c92" stroke-width="0.9"/></svg>
<div style="left:772px;top:355.2px;width:1px;height:9px;background:#3a3a42;"></div>
<svg style="left:777px;top:356.2px" width="7" height="7" viewBox="0 0 7 7"><circle cx="3.5" cy="3.5" r="3.2" fill="#77777c"/><rect x="3" y="3" width="1" height="2.6" fill="#28282e"/><rect x="3" y="1.4" width="1" height="1" fill="#28282e"/></svg>
<div style="left:789px;top:355.2px;width:1px;height:9px;background:#3a3a42;"></div>
<div style="left:607px;top:365.5px;width:184px;height:79px;background:#2d2d34;"></div>
<div style="left:607.5px;top:370px;width:3.5px;height:27px;background:#383840;"></div>
<div style="left:607.5px;top:398.5px;width:3.5px;height:22.5px;background:#383840;"></div>
<div style="left:615.00px;top:370.30px;line-height:11px;font-size:7.8px;color:#cccccc;white-space:pre;transform:scaleX(0.930);transform-origin:0 50%;">Type</div>
<div style="left:614px;top:381.6px;width:56px;height:11.6px;background:#2f3c6c;border:1px solid #34437a;border-radius:1.5px;"></div>
<div style="left:631.15px;top:382.10px;line-height:11px;font-size:7.5px;color:#e8e8ee;white-space:pre;transform:scaleX(0.930);transform-origin:0 50%;">ALUT3</div>
<div style="left:672px;top:381.6px;width:56px;height:11.6px;background:#26262b;border:1px solid #3a3a42;border-radius:1.5px;"></div>
<div style="left:694.57px;top:382.10px;line-height:11px;font-size:7.5px;color:#c8c8c8;white-space:pre;transform:scaleX(0.930);transform-origin:0 50%;">ITX</div>
<div style="left:730px;top:381.6px;width:57.5px;height:11.6px;background:#26262b;border:1px solid #3a3a42;border-radius:1.5px;"></div>
<div style="left:752.35px;top:382.10px;line-height:11px;font-size:7.5px;color:#c8c8c8;white-space:pre;transform:scaleX(0.930);transform-origin:0 50%;">3DL</div>
<div style="left:615.00px;top:397.70px;line-height:11px;font-size:7.8px;color:#cccccc;white-space:pre;transform:scaleX(0.873);transform-origin:0 50%;">Filename</div>
<div style="left:613.2px;top:408.8px;width:141.8px;height:9.4px;background:#1a1a1d;border-radius:1px;"></div>
<div style="left:641.40px;top:408.60px;line-height:10px;font-size:7.3px;color:#e0e0e0;white-space:pre;transform:scaleX(0.953);transform-origin:0 50%;">C:\Users\Jussi\Desktop\test</div>
<div style="left:758.3px;top:408px;width:29.5px;height:10.8px;background:#26262b;border:1px solid #989898;border-radius:2px;"></div>
<svg style="left:769px;top:410.5px" width="7.5" height="6" viewBox="0 0 7.5 6"><path d="M0 0.8 Q0 0 0.8 0 H2.8 L3.6 1 H6.7 Q7.5 1 7.5 1.8 V5.2 Q7.5 6 6.7 6 H0.8 Q0 6 0 5.2Z" fill="#e8c84a"/></svg>
<div style="left:613.2px;top:426.4px;width:175.5px;height:11px;background:#2a2a30;border:1px solid #989898;border-radius:2px;"></div>
<div style="left:686.10px;top:426.60px;line-height:11px;font-size:7.5px;color:#cccccc;white-space:pre;transform:scaleX(0.917);transform-origin:0 50%;">Write File</div>
<div style="left:7.2px;top:23.6px;width:321.6px;height:527.2px;background:#fff;border:1px solid #34557f;border-top-color:#6f8bb4;box-shadow:0 0 5px rgba(0,0,0,0.4);"></div>
<svg style="left:12px;top:28px" width="9" height="9.5" viewBox="0 0 9 9.5"><rect x="0.5" y="1.5" width="7" height="7.5" fill="#e8f0d8" stroke="#7a8a6a" stroke-width="0.8"/><rect x="1.2" y="5.8" width="5.6" height="2.6" fill="#6ab82e"/><path d="M8.6 0.2 L4.2 5.2 L3.6 6.6 L5 6 L9 1Z" fill="#e8a020"/></svg>
<div style="left:24.00px;top:27.10px;line-height:11px;font-size:7.6px;color:#1a1a1a;white-space:pre;transform:scaleX(0.884);transform-origin:0 50%;">C:\Users\Jussi\Desktop\test.alut3 - Notepad++</div>
<div style="left:261.3px;top:32.3px;width:5.4px;height:0.7px;background:#444;"></div>
<div style="left:286px;top:29.8px;width:6px;height:6px;border:0.7px solid #444;"></div>
<svg style="left:312.3px;top:29.8px" width="5.6" height="5.6" viewBox="0 0 5.6 5.6"><path d="M0.2 0.2 L5.4 5.4 M5.4 0.2 L0.2 5.4" stroke="#444" stroke-width="0.7"/></svg>
<div style="left:11.75px;top:41.70px;line-height:11px;font-size:7.5px;color:#1a1a1a;white-space:pre;transform:scaleX(0.889);transform-origin:0 50%;">File</div>
<div style="left:29.50px;top:41.70px;line-height:11px;font-size:7.5px;color:#1a1a1a;white-space:pre;transform:scaleX(0.870);transform-origin:0 50%;">Edit</div>
<div style="left:48.75px;top:41.70px;line-height:11px;font-size:7.5px;color:#1a1a1a;white-space:pre;transform:scaleX(0.821);transform-origin:0 50%;">Search</div>
<div style="left:76.25px;top:41.70px;line-height:11px;font-size:7.5px;color:#1a1a1a;white-space:pre;transform:scaleX(0.884);transform-origin:0 50%;">View</div>
<div style="left:98.25px;top:41.70px;line-height:11px;font-size:7.5px;color:#1a1a1a;white-space:pre;transform:scaleX(0.895);transform-origin:0 50%;">Encoding</div>
<div style="left:134.25px;top:41.70px;line-height:11px;font-size:7.5px;color:#1a1a1a;white-space:pre;transform:scaleX(0.869);transform-origin:0 50%;">Language</div>
<div style="left:171.25px;top:41.70px;line-height:11px;font-size:7.5px;color:#1a1a1a;white-space:pre;transform:scaleX(0.876);transform-origin:0 50%;">Settings</div>
<div style="left:202.50px;top:41.70px;line-height:11px;font-size:7.5px;color:#1a1a1a;white-space:pre;transform:scaleX(0.936);transform-origin:0 50%;">Macro</div>
<div style="left:229.50px;top:41.70px;line-height:11px;font-size:7.5px;color:#1a1a1a;white-space:pre;transform:scaleX(0.854);transform-origin:0 50%;">Run</div>
<div style="left:249.25px;top:41.70px;line-height:11px;font-size:7.5px;color:#1a1a1a;white-space:pre;transform:scaleX(0.894);transform-origin:0 50%;">Plugins</div>
<div style="left:278.75px;top:41.70px;line-height:11px;font-size:7.5px;color:#1a1a1a;white-space:pre;transform:scaleX(0.937);transform-origin:0 50%;">Window</div>
<div style="left:311.25px;top:41.70px;line-height:11px;font-size:7.5px;color:#1a1a1a;white-space:pre;transform:scaleX(0.930);transform-origin:0 50%;">?</div>
<div style="left:320.00px;top:53.00px;line-height:10px;font-size:7px;color:#333;white-space:pre;transform:scaleX(0.930);transform-origin:0 50%;">X</div>
<div style="left:8px;top:61.5px;width:320px;height:17.5px;background:linear-gradient(to bottom,#fff 40%,#f1f1f1);"></div>
<svg style="left:11px;top:65.4px" width="9" height="9" viewBox="0 0 9 9"><path d="M1.5 0.5 H5.5 L7.5 2.5 V8.5 H1.5Z" fill="#fdfdfd" stroke="#9aa4b4" stroke-width="0.8"/><circle cx="6.6" cy="6.8" r="1.9" fill="#58a83c"/></svg>
<svg style="left:23.5px;top:65.4px" width="9" height="9" viewBox="0 0 9 9"><rect x="3.5" y="0.5" width="5" height="5" fill="#a8c8ee" stroke="#6a94c8" stroke-width="0.6"/><path d="M0.4 3.2 H3 L3.8 4.2 H8 V8.4 H0.4Z" fill="#f2cf62" stroke="#c89a28" stroke-width="0.6"/></svg>
<svg style="left:36.25px;top:65.4px" width="9" height="9" viewBox="0 0 9 9"><rect x="0.8" y="0.8" width="7.4" height="7.4" fill="#8a8e96"/><rect x="2.2" y="0.8" width="4.6" height="2.8" fill="#e8e8ec"/><rect x="2" y="5" width="5" height="3.2" fill="#d8d8dc"/></svg>
<svg style="left:48.75px;top:65.4px" width="9" height="9" viewBox="0 0 9 9"><rect x="0.6" y="0.6" width="5.6" height="5.6" fill="#8a8e96"/><rect x="2.8" y="2.8" width="5.6" height="5.6" fill="#7c8088" stroke="#fff" stroke-width="0.5"/><rect x="4" y="2.8" width="3.2" height="1.8" fill="#e8e8ec"/></svg>
<svg style="left:61.75px;top:65.4px" width="9" height="9" viewBox="0 0 9 9"><path d="M1.5 0.5 H5.5 L7.5 2.5 V8.5 H1.5Z" fill="#fdfdfd" stroke="#9aa4b4" stroke-width="0.8"/><circle cx="6.6" cy="6.8" r="1.9" fill="#e07a28"/></svg>
<svg style="left:75.5px;top:65.4px" width="9" height="9" viewBox="0 0 9 9"><path d="M0.6 0.4 H3.8 L5.2 1.8 V6.5 H0.6Z" fill="#fdfdfd" stroke="#9aa4b4" stroke-width="0.7"/><path d="M3 2 H6.4 L7.8 3.4 V8.5 H3Z" fill="#fdfdfd" stroke="#9aa4b4" stroke-width="0.7"/><circle cx="7" cy="7" r="1.8" fill="#e07a28"/></svg>
<svg style="left:88px;top:65.4px" width="9" height="9" viewBox="0 0 9 9"><rect x="2.2" y="0.6" width="4.6" height="3" fill="#fff" stroke="#8a94a4" stroke-width="0.6"/><rect x="0.5" y="3.2" width="8" height="3.8" rx="0.8" fill="#9aa8c0" stroke="#6a7890" stroke-width="0.6"/><rect x="2" y="5.8" width="5" height="2.6" fill="#fff" stroke="#8a94a4" stroke-width="0.6"/></svg>
<div style="left:100.35px;top:65.5px;width:0.9px;height:10px;background:#b8b8b8;"></div>
<svg style="left:104.25px;top:65.4px" width="9" height="9" viewBox="0 0 9 9"><path d="M3.4 1 L5.4 6 M5.8 1 L3.8 6" stroke="#9a9a9a" stroke-width="0.8" fill="none"/><circle cx="3.2" cy="6.9" r="1.1" fill="none" stroke="#8a8a8a" stroke-width="0.8"/><circle cx="6" cy="6.9" r="1.1" fill="none" stroke="#8a8a8a" stroke-width="0.8"/></svg>
<svg style="left:118px;top:65.4px" width="9" height="9" viewBox="0 0 9 9"><rect x="0.8" y="0.8" width="4.6" height="5.6" fill="#dcdcdc" stroke="#9a9a9a" stroke-width="0.7"/><rect x="3.4" y="2.8" width="4.8" height="5.6" fill="#eee" stroke="#9a9a9a" stroke-width="0.7"/></svg>
<svg style="left:131.25px;top:65.4px" width="9" height="9" viewBox="0 0 9 9"><rect x="0.8" y="1.2" width="6" height="7.2" fill="#e0b868" stroke="#a88a48" stroke-width="0.7"/><rect x="2.4" y="0.4" width="2.8" height="1.8" fill="#999"/><rect x="3.6" y="3.4" width="4.6" height="5" fill="#dce8f8" stroke="#9ab0d0" stroke-width="0.6"/></svg>
<div style="left:143.85px;top:65.5px;width:0.9px;height:10px;background:#b8b8b8;"></div>
<svg style="left:147.25px;top:65.4px" width="9" height="9" viewBox="0 0 9 9"><path d="M2 2.4 H5.3 Q7.4 2.4 7.4 4.5 Q7.4 6.6 5.3 6.6 H3.4" fill="none" stroke="#8c8c8c" stroke-width="1.8"/><path d="M3.9 4 L0.6 6.6 L3.9 9.2Z" fill="#8c8c8c"/></svg>
<svg style="left:161.25px;top:65.4px" width="9" height="9" viewBox="0 0 9 9"><path d="M7 6.8 H3.7 Q1.6 6.8 1.6 4.7 Q1.6 2.6 3.7 2.6 H5.6" fill="none" stroke="#8c8c8c" stroke-width="1.8"/><path d="M5.1 0 L8.4 2.6 L5.1 5.2Z" fill="#8c8c8c"/></svg>
<div style="left:173.85px;top:65.5px;width:0.9px;height:10px;background:#b8b8b8;"></div>
<svg style="left:178.75px;top:65.4px" width="9" height="9" viewBox="0 0 9 9"><rect x="0.8" y="3" width="3" height="5" rx="0.8" fill="#333"/><rect x="5.2" y="3" width="3" height="5" rx="0.8" fill="#333"/><rect x="1.6" y="0.8" width="1.6" height="2.6" fill="#444"/><rect x="5.8" y="0.8" width="1.6" height="2.6" fill="#444"/><rect x="3.5" y="3.6" width="2" height="1.8" fill="#555"/></svg>
<svg style="left:191.75px;top:65.4px" width="9" height="9" viewBox="0 0 9 9"><rect x="0.6" y="0.8" width="2.6" height="3" fill="#4a86d8"/><path d="M3.2 3 Q6 2.2 6.8 4.6" fill="none" stroke="#3a7ad0" stroke-width="0.8"/><rect x="4.6" y="5" width="3.8" height="3.4" fill="#9ac0ee" stroke="#3a7ad0" stroke-width="0.6"/></svg>
<div style="left:205.1px;top:65.5px;width:0.9px;height:10px;background:#b8b8b8;"></div>
<svg style="left:208.75px;top:65.4px" width="9" height="9" viewBox="0 0 9 9"><circle cx="3.6" cy="3.6" r="2.7" fill="#d4e4f0" stroke="#b0c0d0" stroke-width="0.7"/><path d="M5.8 5.8 L7.6 7.8" stroke="#6a6a5a" stroke-width="1"/><circle cx="5.3" cy="4.6" r="1.4" fill="#4aa848"/></svg>
<svg style="left:222.25px;top:65.4px" width="9" height="9" viewBox="0 0 9 9"><circle cx="3.6" cy="3.6" r="2.7" fill="#dcdce8" stroke="#b8b8c8" stroke-width="0.7"/><path d="M5.8 5.8 L7.6 7.8" stroke="#6a6a5a" stroke-width="1"/><circle cx="5.3" cy="4.6" r="1.4" fill="#d84848"/></svg>
<div style="left:234.1px;top:65.5px;width:0.9px;height:10px;background:#b8b8b8;"></div>
<svg style="left:239.25px;top:65.4px" width="9" height="9" viewBox="0 0 9 9"><rect x="0.6" y="0.8" width="7" height="6" fill="#fff" stroke="#8a9ab4" stroke-width="0.7"/><path d="M0.6 2.2 H7.6 M4 2.2 V6.8" stroke="#8a9ab4" stroke-width="0.6"/><rect x="4.8" y="5" width="3.8" height="3.4" fill="#eab848"/><path d="M5.6 5 V4.2 Q5.6 3.4 6.7 3.4 Q7.8 3.4 7.8 4.2 V5" fill="none" stroke="#d8a838" stroke-width="0.7"/></svg>
<svg style="left:252.5px;top:65.4px" width="9" height="9" viewBox="0 0 9 9"><rect x="0.6" y="0.8" width="7" height="6" fill="#fff" stroke="#8a9ab4" stroke-width="0.7"/><path d="M0.6 2.2 H7.6 M0.6 4.4 H7.6" stroke="#8a9ab4" stroke-width="0.6"/><rect x="4.8" y="5" width="3.8" height="3.4" fill="#eab848"/><path d="M5.6 5 V4.2 Q5.6 3.4 6.7 3.4 Q7.8 3.4 7.8 4.2 V5" fill="none" stroke="#d8a838" stroke-width="0.7"/></svg>
<div style="left:265.1px;top:65.5px;width:0.9px;height:10px;background:#b8b8b8;"></div>
<svg style="left:269.75px;top:65.4px" width="9" height="9" viewBox="0 0 9 9"><path d="M0.8 2.4 H5.2" stroke="#333" stroke-width="1"/><path d="M0.8 4.6 H8 V7 H6.2 M0.8 7 H4" fill="none" stroke="#5a7ab0" stroke-width="0.8"/><path d="M6.6 5.9 L5.2 7 L6.6 8.1Z" fill="#3a6ac0"/></svg>
<svg style="left:282.5px;top:65.4px" width="9" height="9" viewBox="0 0 9 9"><path d="M4.4 1.4 V7.8 M6 1.4 V7.8 M6.8 1.4 H4 Q2.2 1.4 2.2 3 Q2.2 4.6 4 4.6 H4.4" fill="none" stroke="#4a88d8" stroke-width="0.9"/></svg>
<div style="left:294.3px;top:63.6px;width:12.6px;height:11.8px;background:#cfe3f6;"></div>
<svg style="left:296.25px;top:65.4px" width="9" height="9" viewBox="0 0 9 9"><path d="M2 1 H7.5 M4 3.2 H7.5 M4 5.4 H7.5 M2 7.6 H7.5" stroke="#1a2a8a" stroke-width="0.9"/><path d="M1 2.6 V6.2 M1 4.4 H3.4" stroke="#1a2a8a" stroke-width="0.8"/></svg>
<svg style="left:308.5px;top:65.4px" width="9" height="9" viewBox="0 0 9 9"><rect x="0.8" y="1" width="7.4" height="7" fill="#f6ecc0" stroke="#b8b8b8" stroke-width="0.7"/><rect x="2.2" y="2.6" width="4.6" height="3.6" fill="#f2d868"/></svg>
<div style="left:8px;top:79px;width:320px;height:13.5px;background:#f0f0f0;"></div>
<div style="left:9px;top:81px;width:47px;height:11.5px;background:#fafafa;border-left:0.8px solid #c8c8c8;border-right:0.8px solid #c8c8c8;"></div>
<div style="left:8.8px;top:78.6px;width:47.4px;height:2.5px;background:linear-gradient(to bottom,#f8b85a,#f0a040);border-radius:1px 1px 0 0;"></div>
<svg style="left:9.8px;top:82.6px" width="8.6" height="8" viewBox="0 0 8.6 8"><rect x="0.4" y="0.4" width="7.8" height="7.2" fill="#5a96dc" rx="0.6"/><rect x="1.8" y="0.4" width="4.8" height="2.8" fill="#e4eef8"/><rect x="1.6" y="4.4" width="5.2" height="3.2" fill="#c8dcf2"/></svg>
<div style="left:20.00px;top:81.30px;line-height:10px;font-size:7.2px;color:#1a1a1a;white-space:pre;transform:scaleX(0.850);transform-origin:0 50%;">test.alut3</div>
<svg style="left:46.7px;top:83.4px" width="6" height="5.6" viewBox="0 0 6 5.6"><rect x="0.3" y="0.3" width="5.4" height="5" fill="#c080a8" stroke="#8a4a7c" stroke-width="0.6"/><path d="M1.6 1.4 L4.4 4.2 M4.4 1.4 L1.6 4.2" stroke="#fff" stroke-width="1"/></svg>
<div style="left:9.8px;top:92.2px;width:317px;height:443.5px;background:#fff;border:0.8px solid #8a8a8a;border-right-color:#d0d0d0;border-bottom-color:#d0d0d0;"></div>
<div style="left:10.6px;top:93px;width:22.6px;height:442px;background:#e4e4e4;"></div>
<div style="left:33.2px;top:93px;width:4.3px;height:442px;background:#f3f3f3;"></div>
<div style="left:37.5px;top:93px;width:278.7px;height:9.2px;background:#e8e8ff;"></div>
<div style="left:316.4px;top:93px;width:11.2px;height:442px;background:#f0f0f0;"></div>
<div style="left:317.6px;top:102.8px;width:6.8px;height:9.6px;background:#c9c9c9;"></div>
<svg style="left:318.6px;top:96.6px" width="4.8" height="3" viewBox="0 0 4.8 3"><path d="M0.4 2.6 L2.4 0.5 L4.4 2.6" fill="none" stroke="#444" stroke-width="0.9"/></svg>
<svg style="left:318.6px;top:527.6px" width="4.8" height="3" viewBox="0 0 4.8 3"><path d="M0.4 0.4 L2.4 2.5 L4.4 0.4" fill="none" stroke="#444" stroke-width="0.9"/></svg>
<div style="left:21.86px;top:94.25px;line-height:9px;font-size:7.4px;color:#a0a0a0;white-space:pre;font-family:'Liberation Mono', monospace;">1</div>
<div style="left:38.00px;top:94.25px;line-height:9px;font-size:7.4px;color:#333;white-space:pre;font-family:'Liberation Mono', monospace;">F5LT3</div>
<div style="left:21.86px;top:103.24px;line-height:9px;font-size:7.4px;color:#a0a0a0;white-space:pre;font-family:'Liberation Mono', monospace;">2</div>
<div style="left:38.00px;top:103.24px;line-height:9px;font-size:7.4px;color:#333;white-space:pre;font-family:'Liberation Mono', monospace;">Size: 33</div>
<div style="left:21.86px;top:112.23px;line-height:9px;font-size:7.4px;color:#a0a0a0;white-space:pre;font-family:'Liberation Mono', monospace;">3</div>
<div style="left:38.00px;top:112.23px;line-height:9px;font-size:7.4px;color:#333;white-space:pre;font-family:'Liberation Mono', monospace;">Type: float32</div>
<div style="left:21.86px;top:121.22px;line-height:9px;font-size:7.4px;color:#a0a0a0;white-space:pre;font-family:'Liberation Mono', monospace;">4</div>
<div style="left:21.86px;top:130.21px;line-height:9px;font-size:7.4px;color:#a0a0a0;white-space:pre;font-family:'Liberation Mono', monospace;">5</div>
<div style="left:38.00px;top:130.21px;line-height:9px;font-size:7.4px;color:#333;white-space:pre;font-family:'Liberation Mono', monospace;">0 0 0</div>
<div style="left:21.86px;top:139.20px;line-height:9px;font-size:7.4px;color:#a0a0a0;white-space:pre;font-family:'Liberation Mono', monospace;">6</div>
<div style="left:38.00px;top:139.20px;line-height:9px;font-size:7.4px;color:#333;white-space:pre;font-family:'Liberation Mono', monospace;">0.03125 0 0</div>
<div style="left:21.86px;top:148.19px;line-height:9px;font-size:7.4px;color:#a0a0a0;white-space:pre;font-family:'Liberation Mono', monospace;">7</div>
<div style="left:38.00px;top:148.19px;line-height:9px;font-size:7.4px;color:#333;white-space:pre;font-family:'Liberation Mono', monospace;">0.0625 0 0</div>
<div style="left:21.86px;top:157.18px;line-height:9px;font-size:7.4px;color:#a0a0a0;white-space:pre;font-family:'Liberation Mono', monospace;">8</div>
<div style="left:38.00px;top:157.18px;line-height:9px;font-size:7.4px;color:#333;white-space:pre;font-family:'Liberation Mono', monospace;">0.09375 0 0</div>
<div style="left:21.86px;top:166.17px;line-height:9px;font-size:7.4px;color:#a0a0a0;white-space:pre;font-family:'Liberation Mono', monospace;">9</div>
<div style="left:38.00px;top:166.17px;line-height:9px;font-size:7.4px;color:#333;white-space:pre;font-family:'Liberation Mono', monospace;">0.125 0 0</div>
<div style="left:17.43px;top:175.16px;line-height:9px;font-size:7.4px;color:#a0a0a0;white-space:pre;font-family:'Liberation Mono', monospace;">10</div>
<div style="left:38.00px;top:175.16px;line-height:9px;font-size:7.4px;color:#333;white-space:pre;font-family:'Liberation Mono', monospace;">0.15625 0 0</div>
<div style="left:17.43px;top:184.15px;line-height:9px;font-size:7.4px;color:#a0a0a0;white-space:pre;font-family:'Liberation Mono', monospace;">11</div>
<div style="left:38.00px;top:184.15px;line-height:9px;font-size:7.4px;color:#333;white-space:pre;font-family:'Liberation Mono', monospace;">0.1875 0 0</div>
<div style="left:17.43px;top:193.14px;line-height:9px;font-size:7.4px;color:#a0a0a0;white-space:pre;font-family:'Liberation Mono', monospace;">12</div>
<div style="left:38.00px;top:193.14px;line-height:9px;font-size:7.4px;color:#333;white-space:pre;font-family:'Liberation Mono', monospace;">0.21875 0 0</div>
<div style="left:17.43px;top:202.13px;line-height:9px;font-size:7.4px;color:#a0a0a0;white-space:pre;font-family:'Liberation Mono', monospace;">13</div>
<div style="left:38.00px;top:202.13px;line-height:9px;font-size:7.4px;color:#333;white-space:pre;font-family:'Liberation Mono', monospace;">0.25 0 0</div>
<div style="left:17.43px;top:211.12px;line-height:9px;font-size:7.4px;color:#a0a0a0;white-space:pre;font-family:'Liberation Mono', monospace;">14</div>
<div style="left:38.00px;top:211.12px;line-height:9px;font-size:7.4px;color:#333;white-space:pre;font-family:'Liberation Mono', monospace;">0.28125 0 0</div>
<div style="left:17.43px;top:220.11px;line-height:9px;font-size:7.4px;color:#a0a0a0;white-space:pre;font-family:'Liberation Mono', monospace;">15</div>
<div style="left:38.00px;top:220.11px;line-height:9px;font-size:7.4px;color:#333;white-space:pre;font-family:'Liberation Mono', monospace;">0.3125 0 0</div>
<div style="left:17.43px;top:229.10px;line-height:9px;font-size:7.4px;color:#a0a0a0;white-space:pre;font-family:'Liberation Mono', monospace;">16</div>
<div style="left:38.00px;top:229.10px;line-height:9px;font-size:7.4px;color:#333;white-space:pre;font-family:'Liberation Mono', monospace;">0.34375 0 0</div>
<div style="left:17.43px;top:238.09px;line-height:9px;font-size:7.4px;color:#a0a0a0;white-space:pre;font-family:'Liberation Mono', monospace;">17</div>
<div style="left:38.00px;top:238.09px;line-height:9px;font-size:7.4px;color:#333;white-space:pre;font-family:'Liberation Mono', monospace;">0.375 0 0</div>
<div style="left:17.43px;top:247.08px;line-height:9px;font-size:7.4px;color:#a0a0a0;white-space:pre;font-family:'Liberation Mono', monospace;">18</div>
<div style="left:38.00px;top:247.08px;line-height:9px;font-size:7.4px;color:#333;white-space:pre;font-family:'Liberation Mono', monospace;">0.40625 0 0</div>
<div style="left:17.43px;top:256.07px;line-height:9px;font-size:7.4px;color:#a0a0a0;white-space:pre;font-family:'Liberation Mono', monospace;">19</div>
<div style="left:38.00px;top:256.07px;line-height:9px;font-size:7.4px;color:#333;white-space:pre;font-family:'Liberation Mono', monospace;">0.4375 0 0</div>
<div style="left:17.43px;top:265.06px;line-height:9px;font-size:7.4px;color:#a0a0a0;white-space:pre;font-family:'Liberation Mono', monospace;">20</div>
<div style="left:38.00px;top:265.06px;line-height:9px;font-size:7.4px;color:#333;white-space:pre;font-family:'Liberation Mono', monospace;">0.46875 0 0</div>
<div style="left:17.43px;top:274.05px;line-height:9px;font-size:7.4px;color:#a0a0a0;white-space:pre;font-family:'Liberation Mono', monospace;">21</div>
<div style="left:38.00px;top:274.05px;line-height:9px;font-size:7.4px;color:#333;white-space:pre;font-family:'Liberation Mono', monospace;">0.5 0 0</div>
<div style="left:17.43px;top:283.04px;line-height:9px;font-size:7.4px;color:#a0a0a0;white-space:pre;font-family:'Liberation Mono', monospace;">22</div>
<div style="left:38.00px;top:283.04px;line-height:9px;font-size:7.4px;color:#333;white-space:pre;font-family:'Liberation Mono', monospace;">0.53125 0 0</div>
<div style="left:17.43px;top:292.03px;line-height:9px;font-size:7.4px;color:#a0a0a0;white-space:pre;font-family:'Liberation Mono', monospace;">23</div>
<div style="left:38.00px;top:292.03px;line-height:9px;font-size:7.4px;color:#333;white-space:pre;font-family:'Liberation Mono', monospace;">0.5625 0 0</div>
<div style="left:17.43px;top:301.02px;line-height:9px;font-size:7.4px;color:#a0a0a0;white-space:pre;font-family:'Liberation Mono', monospace;">24</div>
<div style="left:38.00px;top:301.02px;line-height:9px;font-size:7.4px;color:#333;white-space:pre;font-family:'Liberation Mono', monospace;">0.59375 0 0</div>
<div style="left:17.43px;top:310.01px;line-height:9px;font-size:7.4px;color:#a0a0a0;white-space:pre;font-family:'Liberation Mono', monospace;">25</div>
<div style="left:38.00px;top:310.01px;line-height:9px;font-size:7.4px;color:#333;white-space:pre;font-family:'Liberation Mono', monospace;">0.625 0 0</div>
<div style="left:17.43px;top:319.00px;line-height:9px;font-size:7.4px;color:#a0a0a0;white-space:pre;font-family:'Liberation Mono', monospace;">26</div>
<div style="left:38.00px;top:319.00px;line-height:9px;font-size:7.4px;color:#333;white-space:pre;font-family:'Liberation Mono', monospace;">0.65625 0 0</div>
<div style="left:17.43px;top:327.99px;line-height:9px;font-size:7.4px;color:#a0a0a0;white-space:pre;font-family:'Liberation Mono', monospace;">27</div>
<div style="left:38.00px;top:327.99px;line-height:9px;font-size:7.4px;color:#333;white-space:pre;font-family:'Liberation Mono', monospace;">0.6875 0 0</div>
<div style="left:17.43px;top:336.98px;line-height:9px;font-size:7.4px;color:#a0a0a0;white-space:pre;font-family:'Liberation Mono', monospace;">28</div>
<div style="left:38.00px;top:336.98px;line-height:9px;font-size:7.4px;color:#333;white-space:pre;font-family:'Liberation Mono', monospace;">0.71875 0 0</div>
<div style="left:17.43px;top:345.97px;line-height:9px;font-size:7.4px;color:#a0a0a0;white-space:pre;font-family:'Liberation Mono', monospace;">29</div>
<div style="left:38.00px;top:345.97px;line-height:9px;font-size:7.4px;color:#333;white-space:pre;font-family:'Liberation Mono', monospace;">0.75 0 0</div>
<div style="left:17.43px;top:354.96px;line-height:9px;font-size:7.4px;color:#a0a0a0;white-space:pre;font-family:'Liberation Mono', monospace;">30</div>
<div style="left:38.00px;top:354.96px;line-height:9px;font-size:7.4px;color:#333;white-space:pre;font-family:'Liberation Mono', monospace;">0.78125 0 0</div>
<div style="left:17.43px;top:363.95px;line-height:9px;font-size:7.4px;color:#a0a0a0;white-space:pre;font-family:'Liberation Mono', monospace;">31</div>
<div style="left:38.00px;top:363.95px;line-height:9px;font-size:7.4px;color:#333;white-space:pre;font-family:'Liberation Mono', monospace;">0.8125 0 0</div>
<div style="left:17.43px;top:372.94px;line-height:9px;font-size:7.4px;color:#a0a0a0;white-space:pre;font-family:'Liberation Mono', monospace;">32</div>
<div style="left:38.00px;top:372.94px;line-height:9px;font-size:7.4px;color:#333;white-space:pre;font-family:'Liberation Mono', monospace;">0.84375 0 0</div>
<div style="left:17.43px;top:381.93px;line-height:9px;font-size:7.4px;color:#a0a0a0;white-space:pre;font-family:'Liberation Mono', monospace;">33</div>
<div style="left:38.00px;top:381.93px;line-height:9px;font-size:7.4px;color:#333;white-space:pre;font-family:'Liberation Mono', monospace;">0.875 0 0</div>
<div style="left:17.43px;top:390.92px;line-height:9px;font-size:7.4px;color:#a0a0a0;white-space:pre;font-family:'Liberation Mono', monospace;">34</div>
<div style="left:38.00px;top:390.92px;line-height:9px;font-size:7.4px;color:#333;white-space:pre;font-family:'Liberation Mono', monospace;">0.90625 0 0</div>
<div style="left:17.43px;top:399.91px;line-height:9px;font-size:7.4px;color:#a0a0a0;white-space:pre;font-family:'Liberation Mono', monospace;">35</div>
<div style="left:38.00px;top:399.91px;line-height:9px;font-size:7.4px;color:#333;white-space:pre;font-family:'Liberation Mono', monospace;">0.9375 0 0</div>
<div style="left:17.43px;top:408.90px;line-height:9px;font-size:7.4px;color:#a0a0a0;white-space:pre;font-family:'Liberation Mono', monospace;">36</div>
<div style="left:38.00px;top:408.90px;line-height:9px;font-size:7.4px;color:#333;white-space:pre;font-family:'Liberation Mono', monospace;">0.96875 0 0</div>
<div style="left:17.43px;top:417.89px;line-height:9px;font-size:7.4px;color:#a0a0a0;white-space:pre;font-family:'Liberation Mono', monospace;">37</div>
<div style="left:38.00px;top:417.89px;line-height:9px;font-size:7.4px;color:#333;white-space:pre;font-family:'Liberation Mono', monospace;">1 0 0</div>
<div style="left:17.43px;top:426.88px;line-height:9px;font-size:7.4px;color:#a0a0a0;white-space:pre;font-family:'Liberation Mono', monospace;">38</div>
<div style="left:38.00px;top:426.88px;line-height:9px;font-size:7.4px;color:#333;white-space:pre;font-family:'Liberation Mono', monospace;">0 0.03125 0</div>
<div style="left:17.43px;top:435.87px;line-height:9px;font-size:7.4px;color:#a0a0a0;white-space:pre;font-family:'Liberation Mono', monospace;">39</div>
<div style="left:38.00px;top:435.87px;line-height:9px;font-size:7.4px;color:#333;white-space:pre;font-family:'Liberation Mono', monospace;">0.03125 0.03125 0</div>
<div style="left:17.43px;top:444.86px;line-height:9px;font-size:7.4px;color:#a0a0a0;white-space:pre;font-family:'Liberation Mono', monospace;">40</div>
<div style="left:38.00px;top:444.86px;line-height:9px;font-size:7.4px;color:#333;white-space:pre;font-family:'Liberation Mono', monospace;">0.0625 0.03125 0</div>
<div style="left:17.43px;top:453.85px;line-height:9px;font-size:7.4px;color:#a0a0a0;white-space:pre;font-family:'Liberation Mono', monospace;">41</div>
<div style="left:38.00px;top:453.85px;line-height:9px;font-size:7.4px;color:#333;white-space:pre;font-family:'Liberation Mono', monospace;">0.09375 0.03125 0</div>
<div style="left:17.43px;top:462.84px;line-height:9px;font-size:7.4px;color:#a0a0a0;white-space:pre;font-family:'Liberation Mono', monospace;">42</div>
<div style="left:38.00px;top:462.84px;line-height:9px;font-size:7.4px;color:#333;white-space:pre;font-family:'Liberation Mono', monospace;">0.125 0.03125 0</div>
<div style="left:17.43px;top:471.83px;line-height:9px;font-size:7.4px;color:#a0a0a0;white-space:pre;font-family:'Liberation Mono', monospace;">43</div>
<div style="left:38.00px;top:471.83px;line-height:9px;font-size:7.4px;color:#333;white-space:pre;font-family:'Liberation Mono', monospace;">0.15625 0.03125 0</div>
<div style="left:17.43px;top:480.82px;line-height:9px;font-size:7.4px;color:#a0a0a0;white-space:pre;font-family:'Liberation Mono', monospace;">44</div>
<div style="left:38.00px;top:480.82px;line-height:9px;font-size:7.4px;color:#333;white-space:pre;font-family:'Liberation Mono', monospace;">0.1875 0.03125 0</div>
<div style="left:17.43px;top:489.81px;line-height:9px;font-size:7.4px;color:#a0a0a0;white-space:pre;font-family:'Liberation Mono', monospace;">45</div>
<div style="left:38.00px;top:489.81px;line-height:9px;font-size:7.4px;color:#333;white-space:pre;font-family:'Liberation Mono', monospace;">0.21875 0.03125 0</div>
<div style="left:17.43px;top:498.80px;line-height:9px;font-size:7.4px;color:#a0a0a0;white-space:pre;font-family:'Liberation Mono', monospace;">46</div>
<div style="left:38.00px;top:498.80px;line-height:9px;font-size:7.4px;color:#333;white-space:pre;font-family:'Liberation Mono', monospace;">0.25 0.03125 0</div>
<div style="left:17.43px;top:507.79px;line-height:9px;font-size:7.4px;color:#a0a0a0;white-space:pre;font-family:'Liberation Mono', monospace;">47</div>
<div style="left:38.00px;top:507.79px;line-height:9px;font-size:7.4px;color:#333;white-space:pre;font-family:'Liberation Mono', monospace;">0.28125 0.03125 0</div>
<div style="left:17.43px;top:516.78px;line-height:9px;font-size:7.4px;color:#a0a0a0;white-space:pre;font-family:'Liberation Mono', monospace;">48</div>
<div style="left:38.00px;top:516.78px;line-height:9px;font-size:7.4px;color:#333;white-space:pre;font-family:'Liberation Mono', monospace;">0.3125 0.03125 0</div>
<div style="left:17.43px;top:525.77px;line-height:9px;font-size:7.4px;color:#a0a0a0;white-space:pre;font-family:'Liberation Mono', monospace;">49</div>
<div style="left:38.00px;top:525.77px;line-height:9px;font-size:7.4px;color:#333;white-space:pre;font-family:'Liberation Mono', monospace;">0.34375 0.03125 0</div>
<div style="left:8px;top:536px;width:320px;height:14px;background:#f0f0f0;border-top:0.8px solid #d8d8d8;"></div>
<div style="left:8.75px;top:538.40px;line-height:10px;font-size:7.2px;color:#1a1a1a;white-space:pre;transform:scaleX(0.962);transform-origin:0 50%;">lengt</div>
<div style="left:24.3px;top:538px;width:0.8px;height:10px;background:#d0d0d0;"></div>
<div style="left:26.25px;top:538.40px;line-height:10px;font-size:7.2px;color:#1a1a1a;white-space:pre;transform:scaleX(0.904);transform-origin:0 50%;">Ln : 1</div>
<div style="left:49.50px;top:538.40px;line-height:10px;font-size:7.2px;color:#1a1a1a;white-space:pre;transform:scaleX(0.866);transform-origin:0 50%;">Col : 1</div>
<div style="left:74.50px;top:538.40px;line-height:10px;font-size:7.2px;color:#1a1a1a;white-space:pre;transform:scaleX(0.843);transform-origin:0 50%;">Sel : 0 | 0</div>
<div style="left:171.2px;top:538px;width:0.8px;height:10px;background:#d0d0d0;"></div>
<div style="left:173.00px;top:538.40px;line-height:10px;font-size:7.2px;color:#1a1a1a;white-space:pre;transform:scaleX(0.882);transform-origin:0 50%;">Windows (CR LF)</div>
<div style="left:232.5px;top:538px;width:0.8px;height:10px;background:#d0d0d0;"></div>
<div style="left:235.00px;top:538.40px;line-height:10px;font-size:7.2px;color:#1a1a1a;white-space:pre;transform:scaleX(0.859);transform-origin:0 50%;">UTF-8</div>
<div style="left:299.5px;top:538px;width:0.8px;height:10px;background:#d0d0d0;"></div>
<div style="left:302.00px;top:538.40px;line-height:10px;font-size:7.2px;color:#1a1a1a;white-space:pre;transform:scaleX(0.834);transform-origin:0 50%;">INS</div>
<div style="left:316.5px;top:538px;width:0.8px;height:10px;background:#d0d0d0;"></div>
<svg style="left:320.5px;top:543px" width="6" height="6" viewBox="0 0 6 6"><path d="M5 1 V2 M5 3 V4 M3 3 V4 M5 5 V6 M3 5 V6 M1 5 V6" stroke="#a8a8a8" stroke-width="1"/></svg>
<svg width="800" height="568" viewBox="0 0 800 568" style="pointer-events:none"><path d="M360.0 317.5C357.5 318.1 349.2 318.9 345.0 321.0C340.8 323.1 336.9 326.4 335.0 330.0C333.1 333.6 332.7 338.3 333.5 342.5C334.3 346.7 336.0 351.4 340.0 355.0C344.0 358.6 350.4 361.8 357.5 363.8C364.6 365.8 375.4 367.2 382.5 367.2C389.6 367.2 395.4 366.2 400.0 363.8C404.6 361.4 407.9 356.5 410.0 352.5C412.1 348.5 412.9 343.8 412.5 340.0C412.1 336.2 410.4 332.9 407.5 330.0C404.6 327.1 400.0 324.5 395.0 322.5C390.0 320.5 383.8 318.5 377.5 317.8C371.2 317.1 360.4 318.4 357.0 318.5" fill="none" stroke="#c41a1f" stroke-width="1.5" stroke-linecap="round" stroke-linejoin="round"/><path d="M378.8 305.7C379.1 301.8 379.5 291.8 380.6 282.5C381.7 273.2 383.9 259.1 385.5 250.0C387.1 240.9 388.6 234.7 390.0 228.0C391.4 221.3 392.5 215.3 394.0 210.0C395.5 204.7 397.3 200.2 399.0 196.0C400.7 191.8 403.4 186.8 404.3 185.0" fill="none" stroke="#c41a1f" stroke-width="1.35" stroke-linecap="round" stroke-linejoin="round"/><path d="M388.0 203.5C389.4 201.8 393.8 196.2 396.5 193.0C399.2 189.8 402.4 184.0 404.5 184.5C406.6 185.0 407.6 192.1 409.0 196.0C410.4 199.9 412.3 206.0 413.0 208.0" fill="none" stroke="#c41a1f" stroke-width="1.35" stroke-linecap="round" stroke-linejoin="round"/><path d="M608.8 117.0C606.0 118.8 598.1 123.7 592.5 127.5C586.9 131.3 581.2 135.0 575.0 140.0C568.8 145.0 560.4 152.5 555.0 157.5C549.6 162.5 546.7 165.9 542.6 170.0C538.5 174.1 536.0 177.3 530.6 182.0C525.2 186.7 517.2 192.9 510.5 198.1C503.8 203.3 497.1 207.8 490.4 213.2C483.7 218.5 476.0 224.7 470.3 230.2C464.6 235.7 461.0 240.9 456.3 246.3C451.6 251.7 446.6 257.7 442.2 262.4C437.8 267.1 433.5 270.8 430.2 274.4C426.9 278.0 424.7 280.6 422.1 284.0C419.5 287.4 417.5 291.4 414.6 295.0C411.8 298.6 407.1 303.0 405.0 305.6C402.9 308.2 402.5 309.7 402.0 310.5" fill="none" stroke="#c41a1f" stroke-width="1.35" stroke-linecap="round" stroke-linejoin="round"/><path d="M589.5 121.2C591.2 120.8 596.8 119.2 600.0 118.5C603.2 117.8 607.6 115.8 608.8 117.0C609.9 118.2 608.0 123.4 607.0 126.0C606.0 128.6 604.5 130.5 602.5 132.5C600.5 134.5 596.2 137.2 595.0 138.2" fill="none" stroke="#c41a1f" stroke-width="1.35" stroke-linecap="round" stroke-linejoin="round"/><path d="M405.4 306.4 L407 307.4 L405.4 311 L399.4 314.6 L401.6 310.2Z" fill="#c41a1f" stroke="#c41a1f" stroke-width="0.6" stroke-linecap="round" stroke-linejoin="round"/><path d="M616.0 223.0C617.6 220.3 619.3 219.7 625.0 218.8C630.7 217.9 641.7 217.4 650.0 217.5C658.3 217.6 666.7 218.7 675.0 219.5C683.3 220.3 693.5 221.4 700.0 222.5C706.5 223.6 711.1 224.2 713.8 226.3C716.5 228.4 716.0 231.1 716.3 235.0C716.6 238.9 715.9 246.0 715.5 250.0C715.1 254.0 716.4 257.1 713.8 258.8C711.2 260.5 706.5 259.9 700.0 260.0C693.5 260.1 683.3 259.5 675.0 259.5C666.7 259.5 658.3 259.7 650.0 260.0C641.7 260.3 630.6 261.2 625.0 261.2C619.4 261.2 618.0 262.3 616.3 260.0C614.6 257.7 615.1 251.7 615.0 247.5C614.9 243.3 615.3 239.1 615.5 235.0C615.7 230.9 614.4 225.7 616.0 223.0Z" fill="none" stroke="#c41a1f" stroke-width="1.35" stroke-linecap="round" stroke-linejoin="round"/><path d="M616.0 237.8C615.0 238.2 614.1 238.7 610.0 240.3C605.9 241.9 597.5 244.6 591.3 247.3C585.1 250.0 578.2 253.6 572.6 256.3C567.0 259.1 562.3 261.5 557.6 263.8C552.9 266.1 548.8 268.1 544.4 270.3C540.0 272.5 535.4 274.8 531.3 276.9C527.2 279.0 523.4 281.1 520.0 283.0C516.6 284.9 516.1 284.8 510.7 288.5C505.3 292.2 495.6 299.1 487.5 305.0C479.4 310.9 466.2 320.6 462.0 323.8" fill="none" stroke="#c41a1f" stroke-width="1.35" stroke-linecap="round" stroke-linejoin="round"/><path d="M551.2 340.0C553.5 340.4 560.6 341.5 565.0 342.2C569.4 343.0 573.3 343.5 577.5 344.4C581.7 345.3 585.8 346.1 590.0 347.5C594.2 348.9 598.8 350.8 602.5 352.5C606.2 354.2 609.5 356.1 612.5 357.5C615.5 358.9 619.0 360.1 620.3 360.6" fill="none" stroke="#c41a1f" stroke-width="1.35" stroke-linecap="round" stroke-linejoin="round"/><path d="M609.4 346.9C610.3 347.7 613.1 349.7 615.0 351.9C616.9 354.1 619.8 358.0 620.6 360.0C621.4 362.0 620.7 362.5 620.0 363.8C619.3 365.0 618.2 366.5 616.2 367.2C614.2 368.0 609.4 367.9 608.0 368.0" fill="none" stroke="#c41a1f" stroke-width="1.35" stroke-linecap="round" stroke-linejoin="round"/><path d="M513.7 348.7C514.5 351.1 517.4 357.9 518.4 363.0C519.4 368.1 520.3 374.0 519.8 379.5C519.3 385.0 517.9 391.0 515.6 396.0C513.3 401.0 510.4 405.2 506.0 409.8C501.6 414.3 495.9 419.1 489.5 423.5C483.1 427.9 475.8 432.2 467.5 435.9C459.2 439.6 449.2 443.2 440.0 445.5C430.8 447.8 421.7 448.8 412.5 449.6C403.3 450.4 394.2 450.9 385.0 450.5C375.8 450.1 367.1 449.3 357.5 446.9C347.9 444.5 337.9 440.3 327.5 436.2C317.1 432.2 304.6 427.1 295.0 422.5C285.4 417.9 278.3 413.1 270.0 408.8C261.7 404.4 253.3 400.2 245.0 396.2C236.7 392.3 227.9 388.3 220.0 385.0C212.1 381.7 201.2 377.7 197.5 376.2" fill="none" stroke="#c41a1f" stroke-width="1.35" stroke-linecap="round" stroke-linejoin="round"/><path d="M210.0 372.0C208.5 372.8 203.7 375.1 201.0 376.5C198.3 377.9 194.4 378.9 193.8 380.5C193.1 382.1 195.8 384.2 197.0 386.0C198.2 387.8 200.5 390.4 201.2 391.2" fill="none" stroke="#c41a1f" stroke-width="1.35" stroke-linecap="round" stroke-linejoin="round"/></svg>
</div>
</body></html>
